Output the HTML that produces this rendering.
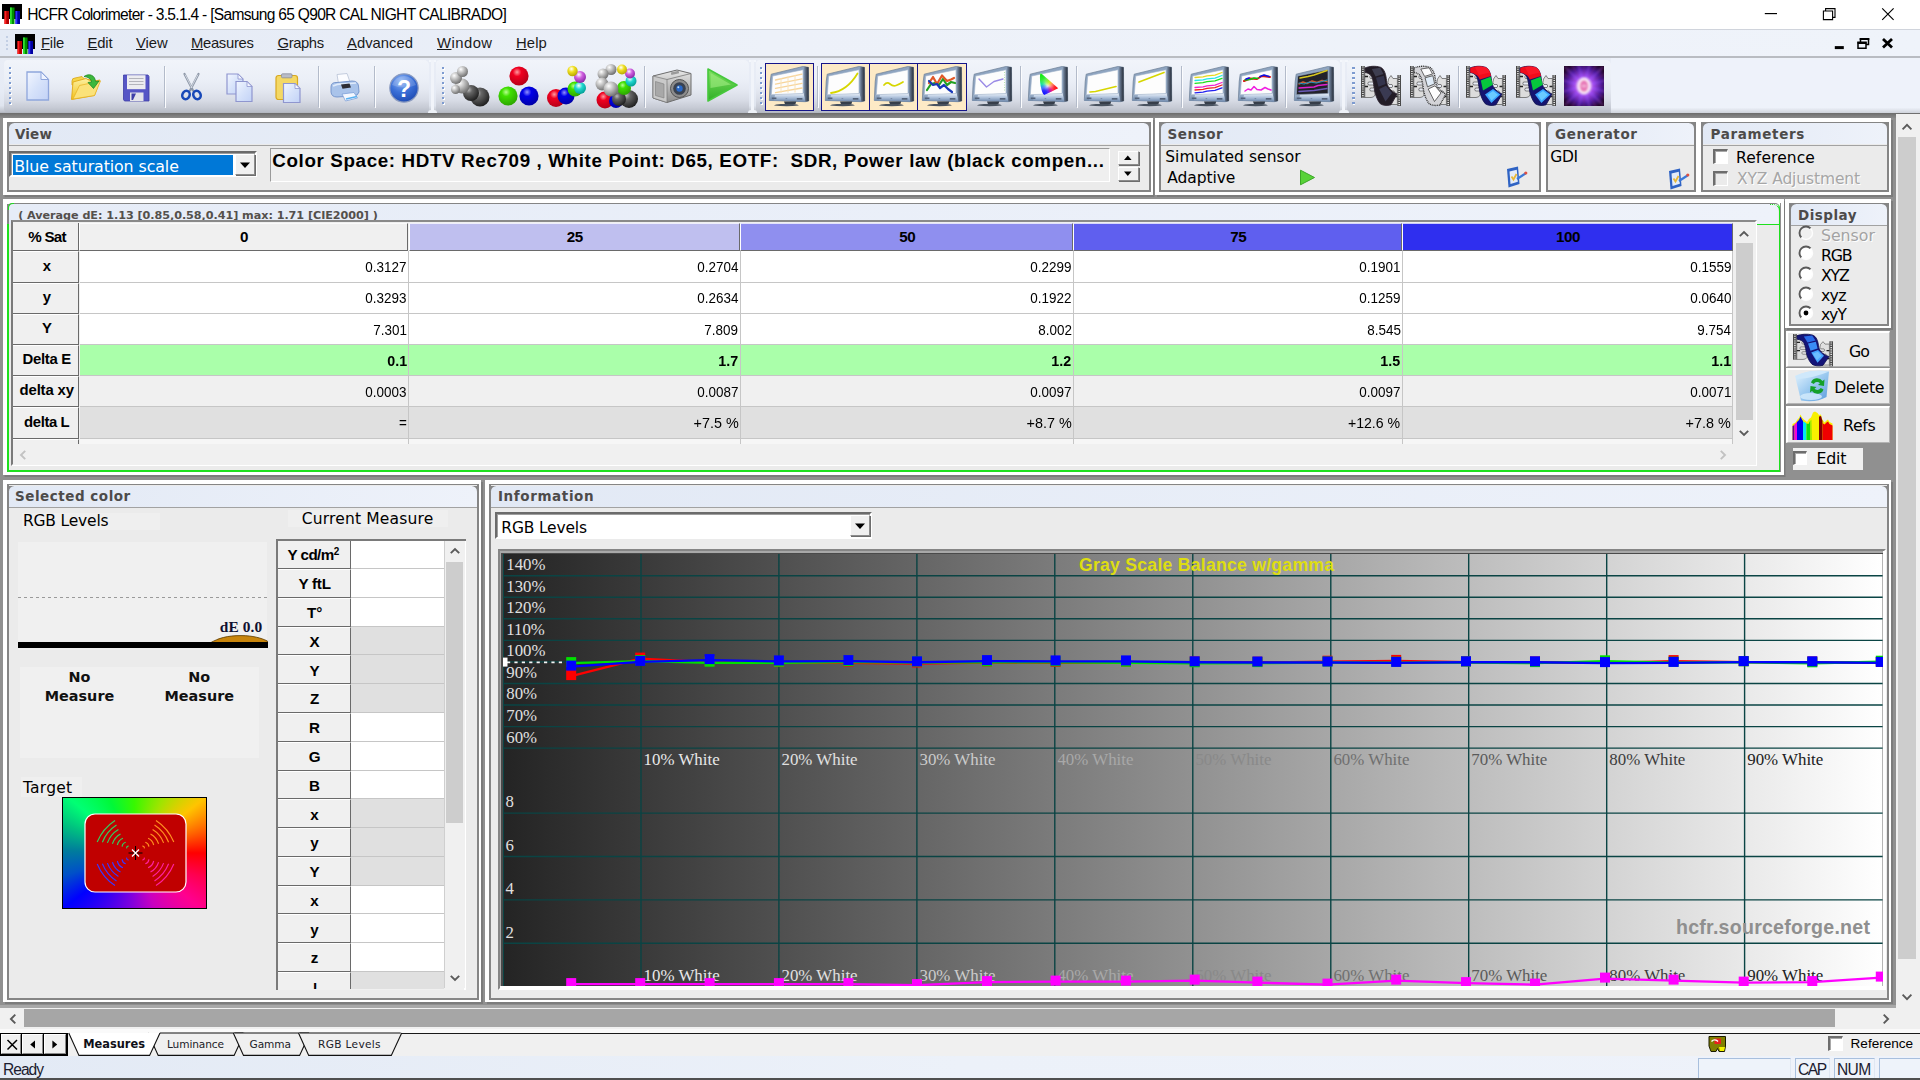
<!DOCTYPE html><html><head><meta charset="utf-8"><title>HCFR Colorimeter</title><style>
*{box-sizing:border-box;margin:0;padding:0}
html,body{width:1920px;height:1080px;overflow:hidden;background:#909090}
body{position:relative;font-family:"Liberation Sans",sans-serif;color:#000}
div{position:absolute}
svg{position:absolute;overflow:visible}
.t{white-space:nowrap;line-height:1}
.dj{font-family:"DejaVu Sans","Liberation Sans",sans-serif}
.djb{font-family:"DejaVu Sans","Liberation Sans",sans-serif;font-weight:bold}
.ser{font-family:"Liberation Serif",serif}
.hdr{background:linear-gradient(90deg,#e3eaf5,#eef2fa);border-bottom:1px solid #9c9c9c}
.pan{background:#ebebeb;border:2px solid #858585;border-top-width:2px}
.u{text-decoration:underline}
</style></head><body>
<!-- chrome -->
<div style="left:0px;top:0px;width:1920px;height:30px;background:#fff"></div>
<svg style="left:2px;top:4px" width="20" height="20" viewBox="0 0 20 20"><rect x="0" y="0" width="20" height="15" fill="#000"/><rect x="2.5" y="7" width="4.5" height="13" fill="#b00000"/><rect x="2.5" y="7" width="1.8" height="13" fill="#ff2020"/><rect x="8" y="3.5" width="4.5" height="16.5" fill="#009000"/><rect x="8" y="3.5" width="1.8" height="16.5" fill="#30e030"/><rect x="13.5" y="7" width="4.5" height="13" fill="#0000a0"/><rect x="13.5" y="7" width="1.8" height="13" fill="#3030ff"/></svg>
<div class="t" style="left:27.30px;top:6.80px;font-family:'Liberation Sans',sans-serif;font-size:15.6px;color:#000;letter-spacing:-0.716px;">HCFR Colorimeter - 3.5.1.4 - [Samsung 65 Q90R CAL NIGHT CALIBRADO]</div>
<svg style="left:1750px;top:0" width="170" height="30" viewBox="0 0 170 30"><path d="M14.8 13.6h12.2" stroke="#000" stroke-width="1.15" fill="none"/><path d="M73.4 11h9.2v8.6h-9.2z M75.6 11v-2.4h9.4v8.8h-2.4" stroke="#000" stroke-width="1.1" fill="none"/><path d="M132.2 8.4l11.4 11.4M143.6 8.4l-11.4 11.4" stroke="#000" stroke-width="1.15" fill="none"/></svg>
<div style="left:0px;top:29px;width:1920px;height:29px;background:linear-gradient(90deg,#e4eaf5 0%,#edf1f9 40%,#eff3fa 100%);border-top:1px solid #d0d4dc"></div>
<div style="left:0px;top:56.2px;width:1920px;height:1.4px;background:#b9bcc2"></div>
<div style="left:6px;top:36px;width:2px;height:2px;background:#c3cfe4"></div>
<div style="left:6px;top:40px;width:2px;height:2px;background:#c3cfe4"></div>
<div style="left:6px;top:44px;width:2px;height:2px;background:#c3cfe4"></div>
<div style="left:6px;top:48px;width:2px;height:2px;background:#c3cfe4"></div>
<svg style="left:15px;top:34px" width="20" height="20" viewBox="0 0 20 20"><rect x="0" y="0" width="20" height="15" fill="#000"/><rect x="2.5" y="7" width="4.5" height="13" fill="#b00000"/><rect x="2.5" y="7" width="1.8" height="13" fill="#ff2020"/><rect x="8" y="3.5" width="4.5" height="16.5" fill="#009000"/><rect x="8" y="3.5" width="1.8" height="16.5" fill="#30e030"/><rect x="13.5" y="7" width="4.5" height="13" fill="#0000a0"/><rect x="13.5" y="7" width="1.8" height="13" fill="#3030ff"/></svg>
<div class="t" style="left:41.00px;top:36.30px;font-family:'Liberation Sans',sans-serif;font-size:14.8px;color:#1a1a1a;letter-spacing:-0.212px;"><span class="u">F</span>ile</div>
<div class="t" style="left:87.50px;top:36.30px;font-family:'Liberation Sans',sans-serif;font-size:14.8px;color:#1a1a1a;letter-spacing:-0.126px;"><span class="u">E</span>dit</div>
<div class="t" style="left:136.00px;top:36.30px;font-family:'Liberation Sans',sans-serif;font-size:14.8px;color:#1a1a1a;letter-spacing:-0.078px;"><span class="u">V</span>iew</div>
<div class="t" style="left:191.00px;top:36.30px;font-family:'Liberation Sans',sans-serif;font-size:14.8px;color:#1a1a1a;letter-spacing:-0.310px;"><span class="u">M</span>easures</div>
<div class="t" style="left:277.50px;top:36.30px;font-family:'Liberation Sans',sans-serif;font-size:14.8px;color:#1a1a1a;letter-spacing:-0.389px;"><span class="u">G</span>raphs</div>
<div class="t" style="left:347.00px;top:36.30px;font-family:'Liberation Sans',sans-serif;font-size:14.8px;color:#1a1a1a;letter-spacing:0.021px;"><span class="u">A</span>dvanced</div>
<div class="t" style="left:437.00px;top:36.30px;font-family:'Liberation Sans',sans-serif;font-size:14.8px;color:#1a1a1a;letter-spacing:0.477px;"><span class="u">W</span>indow</div>
<div class="t" style="left:516.00px;top:36.30px;font-family:'Liberation Sans',sans-serif;font-size:14.8px;color:#1a1a1a;letter-spacing:0.140px;"><span class="u">H</span>elp</div>
<svg style="left:1825px;top:30px" width="80" height="28" viewBox="0 0 80 28"><path d="M9.8 17.6h9" stroke="#000" stroke-width="3" fill="none"/><path d="M33 13.2h8v5h-8z M35.5 12.5v-3.4h8v5.4h-2" stroke="#000" stroke-width="1.5" fill="none"/><path d="M32.2 12.6h9.6M34.7 8.9h9.6" stroke="#000" stroke-width="2"/><path d="M58 9l9 8.4M67 9l-9 8.4" stroke="#000" stroke-width="2.8" fill="none"/></svg>
<!-- toolbar -->
<svg width="0" height="0" style="left:0;top:0"><defs><linearGradient id="bz" x1="0" y1="0" x2="0" y2="1"><stop offset="0" stop-color="#c9d6e8"/><stop offset="0.7" stop-color="#a9bcd6"/><stop offset="1" stop-color="#6f86a8"/></linearGradient><linearGradient id="bzl" x1="0" y1="0" x2="0" y2="1"><stop offset="0" stop-color="#eef3fa"/><stop offset="0.45" stop-color="#b4c6de"/><stop offset="1" stop-color="#6c86aa"/></linearGradient><linearGradient id="sd" x1="0" y1="0" x2="1" y2="0"><stop offset="0" stop-color="#8fa4bc"/><stop offset="0.45" stop-color="#56647a"/><stop offset="1" stop-color="#262c36"/></linearGradient><linearGradient id="doc" x1="0" y1="0" x2="1" y2="1"><stop offset="0" stop-color="#f2f6ff"/><stop offset="0.5" stop-color="#d6e2fa"/><stop offset="1" stop-color="#c2d2f6"/></linearGradient><linearGradient id="fold" x1="0" y1="0" x2="0" y2="1"><stop offset="0" stop-color="#fdf0a0"/><stop offset="1" stop-color="#f2c21c"/></linearGradient><radialGradient id="bg1" cx="0.35" cy="0.3" r="0.75"><stop offset="0" stop-color="#fff"/><stop offset="0.25" stop-color="#d8d8d8"/><stop offset="1" stop-color="#6a6a6a"/></radialGradient><radialGradient id="bg2" cx="0.35" cy="0.3" r="0.75"><stop offset="0" stop-color="#bbb"/><stop offset="0.3" stop-color="#666"/><stop offset="1" stop-color="#1c1c1c"/></radialGradient><radialGradient id="br" cx="0.4" cy="0.3" r="0.75"><stop offset="0" stop-color="#ff9aa0"/><stop offset="0.3" stop-color="#f00020"/><stop offset="1" stop-color="#b00018"/></radialGradient><radialGradient id="bgn" cx="0.4" cy="0.3" r="0.75"><stop offset="0" stop-color="#b8ff90"/><stop offset="0.3" stop-color="#40e000"/><stop offset="1" stop-color="#2aa000"/></radialGradient><radialGradient id="bb" cx="0.4" cy="0.3" r="0.75"><stop offset="0" stop-color="#9090ff"/><stop offset="0.3" stop-color="#0000e8"/><stop offset="1" stop-color="#0000a0"/></radialGradient><radialGradient id="by" cx="0.4" cy="0.3" r="0.75"><stop offset="0" stop-color="#fff"/><stop offset="0.4" stop-color="#f0e020"/><stop offset="1" stop-color="#b0a000"/></radialGradient><radialGradient id="bm" cx="0.4" cy="0.3" r="0.75"><stop offset="0" stop-color="#fff"/><stop offset="0.4" stop-color="#d060e0"/><stop offset="1" stop-color="#8020a0"/></radialGradient><radialGradient id="bc" cx="0.4" cy="0.3" r="0.75"><stop offset="0" stop-color="#fff"/><stop offset="0.4" stop-color="#20d8d0"/><stop offset="1" stop-color="#009890"/></radialGradient><radialGradient id="hq" cx="0.4" cy="0.25" r="0.8"><stop offset="0" stop-color="#8db4f4"/><stop offset="0.5" stop-color="#3b70d8"/><stop offset="1" stop-color="#1c48b0"/></radialGradient><radialGradient id="pu" cx="0.5" cy="0.5" r="0.62"><stop offset="0" stop-color="#fff"/><stop offset="0.2" stop-color="#e8a8f8"/><stop offset="0.4" stop-color="#9448ee"/><stop offset="0.7" stop-color="#48189a"/><stop offset="1" stop-color="#200624"/></radialGradient><linearGradient id="grn" x1="0" y1="0" x2="0" y2="1"><stop offset="0" stop-color="#7fe060"/><stop offset="1" stop-color="#2fb028"/></linearGradient><linearGradient id="cam" x1="0" y1="0" x2="0" y2="1"><stop offset="0" stop-color="#e8e8e8"/><stop offset="1" stop-color="#8e8e8e"/></linearGradient></defs></svg>
<div style="left:0px;top:58px;width:1920px;height:56px;background:linear-gradient(180deg,#e9edf6 0%,#e6ebf5 60%,#dfe4ee 85%,#bfc3cc 96%,#9fa3ab 100%)"></div>
<div style="left:1611px;top:58px;width:309px;height:55px;background:linear-gradient(180deg,#eef2fa 0%,#eef2fa 90%,#cfd3db 100%)"></div>
<div style="left:0px;top:113px;width:1920px;height:5px;background:linear-gradient(180deg,#6c6c6c,#828282 70%,#8a8a8a)"></div>
<div style="left:4px;top:60px;width:424.5px;height:52px;background:linear-gradient(180deg,#f1f4fa 0%,#ebeff7 38%,#e4e8f1 58%,#d7dbe5 78%,#c6cad4 92%,#b8bdc7 100%);border-radius:4px 5px 3px 3px"></div>
<div style="left:436px;top:60px;width:312.5px;height:52px;background:linear-gradient(180deg,#f1f4fa 0%,#ebeff7 38%,#e4e8f1 58%,#d7dbe5 78%,#c6cad4 92%,#b8bdc7 100%);border-radius:4px 5px 3px 3px"></div>
<div style="left:756px;top:60px;width:584px;height:52px;background:linear-gradient(180deg,#f1f4fa 0%,#ebeff7 38%,#e4e8f1 58%,#d7dbe5 78%,#c6cad4 92%,#b8bdc7 100%);border-radius:4px 5px 3px 3px"></div>
<div style="left:1347px;top:60px;width:263.5px;height:52px;background:linear-gradient(180deg,#f1f4fa 0%,#ebeff7 38%,#e4e8f1 58%,#d7dbe5 78%,#c6cad4 92%,#b8bdc7 100%);border-radius:4px 5px 3px 3px"></div>
<div style="left:428.5px;top:60px;width:7.5px;height:2px;background:#f4f7fc"></div>
<div style="left:430.8px;top:60px;width:2.9px;height:52px;background:#f1f4fa"></div>
<div style="left:427.5px;top:110px;width:9.5px;height:2.5px;background:#eef2f8;border-radius:3px 3px 0 0"></div>
<div style="left:748.5px;top:60px;width:7.5px;height:2px;background:#f4f7fc"></div>
<div style="left:750.8px;top:60px;width:2.9px;height:52px;background:#f1f4fa"></div>
<div style="left:747.5px;top:110px;width:9.5px;height:2.5px;background:#eef2f8;border-radius:3px 3px 0 0"></div>
<div style="left:1340px;top:60px;width:7.5px;height:2px;background:#f4f7fc"></div>
<div style="left:1342.3px;top:60px;width:2.9px;height:52px;background:#f1f4fa"></div>
<div style="left:1339px;top:110px;width:9.5px;height:2.5px;background:#eef2f8;border-radius:3px 3px 0 0"></div>
<div style="left:10px;top:68px;width:2px;height:2px;background:#fff"></div><div style="left:9px;top:67px;width:2.2px;height:2.2px;background:#7d9bd0"></div><div style="left:10px;top:73px;width:2px;height:2px;background:#fff"></div><div style="left:9px;top:72px;width:2.2px;height:2.2px;background:#7d9bd0"></div><div style="left:10px;top:78px;width:2px;height:2px;background:#fff"></div><div style="left:9px;top:77px;width:2.2px;height:2.2px;background:#7d9bd0"></div><div style="left:10px;top:83px;width:2px;height:2px;background:#fff"></div><div style="left:9px;top:82px;width:2.2px;height:2.2px;background:#7d9bd0"></div><div style="left:10px;top:88px;width:2px;height:2px;background:#fff"></div><div style="left:9px;top:87px;width:2.2px;height:2.2px;background:#7d9bd0"></div><div style="left:10px;top:93px;width:2px;height:2px;background:#fff"></div><div style="left:9px;top:92px;width:2.2px;height:2.2px;background:#7d9bd0"></div><div style="left:10px;top:98px;width:2px;height:2px;background:#fff"></div><div style="left:9px;top:97px;width:2.2px;height:2.2px;background:#7d9bd0"></div><div style="left:10px;top:103px;width:2px;height:2px;background:#fff"></div><div style="left:9px;top:102px;width:2.2px;height:2.2px;background:#7d9bd0"></div>
<div style="left:442.7px;top:68px;width:2.0px;height:2px;background:#fff"></div><div style="left:441.7px;top:67px;width:2.2px;height:2.2px;background:#7d9bd0"></div><div style="left:442.7px;top:73px;width:2.0px;height:2px;background:#fff"></div><div style="left:441.7px;top:72px;width:2.2px;height:2.2px;background:#7d9bd0"></div><div style="left:442.7px;top:78px;width:2.0px;height:2px;background:#fff"></div><div style="left:441.7px;top:77px;width:2.2px;height:2.2px;background:#7d9bd0"></div><div style="left:442.7px;top:83px;width:2.0px;height:2px;background:#fff"></div><div style="left:441.7px;top:82px;width:2.2px;height:2.2px;background:#7d9bd0"></div><div style="left:442.7px;top:88px;width:2.0px;height:2px;background:#fff"></div><div style="left:441.7px;top:87px;width:2.2px;height:2.2px;background:#7d9bd0"></div><div style="left:442.7px;top:93px;width:2.0px;height:2px;background:#fff"></div><div style="left:441.7px;top:92px;width:2.2px;height:2.2px;background:#7d9bd0"></div><div style="left:442.7px;top:98px;width:2.0px;height:2px;background:#fff"></div><div style="left:441.7px;top:97px;width:2.2px;height:2.2px;background:#7d9bd0"></div><div style="left:442.7px;top:103px;width:2.0px;height:2px;background:#fff"></div><div style="left:441.7px;top:102px;width:2.2px;height:2.2px;background:#7d9bd0"></div>
<div style="left:761px;top:68px;width:2px;height:2px;background:#fff"></div><div style="left:760px;top:67px;width:2.2px;height:2.2px;background:#7d9bd0"></div><div style="left:761px;top:73px;width:2px;height:2px;background:#fff"></div><div style="left:760px;top:72px;width:2.2px;height:2.2px;background:#7d9bd0"></div><div style="left:761px;top:78px;width:2px;height:2px;background:#fff"></div><div style="left:760px;top:77px;width:2.2px;height:2.2px;background:#7d9bd0"></div><div style="left:761px;top:83px;width:2px;height:2px;background:#fff"></div><div style="left:760px;top:82px;width:2.2px;height:2.2px;background:#7d9bd0"></div><div style="left:761px;top:88px;width:2px;height:2px;background:#fff"></div><div style="left:760px;top:87px;width:2.2px;height:2.2px;background:#7d9bd0"></div><div style="left:761px;top:93px;width:2px;height:2px;background:#fff"></div><div style="left:760px;top:92px;width:2.2px;height:2.2px;background:#7d9bd0"></div><div style="left:761px;top:98px;width:2px;height:2px;background:#fff"></div><div style="left:760px;top:97px;width:2.2px;height:2.2px;background:#7d9bd0"></div><div style="left:761px;top:103px;width:2px;height:2px;background:#fff"></div><div style="left:760px;top:102px;width:2.2px;height:2.2px;background:#7d9bd0"></div>
<div style="left:1353.4px;top:68px;width:2.0px;height:2px;background:#fff"></div><div style="left:1352.4px;top:67px;width:2.2px;height:2.2px;background:#7d9bd0"></div><div style="left:1353.4px;top:73px;width:2.0px;height:2px;background:#fff"></div><div style="left:1352.4px;top:72px;width:2.2px;height:2.2px;background:#7d9bd0"></div><div style="left:1353.4px;top:78px;width:2.0px;height:2px;background:#fff"></div><div style="left:1352.4px;top:77px;width:2.2px;height:2.2px;background:#7d9bd0"></div><div style="left:1353.4px;top:83px;width:2.0px;height:2px;background:#fff"></div><div style="left:1352.4px;top:82px;width:2.2px;height:2.2px;background:#7d9bd0"></div><div style="left:1353.4px;top:88px;width:2.0px;height:2px;background:#fff"></div><div style="left:1352.4px;top:87px;width:2.2px;height:2.2px;background:#7d9bd0"></div><div style="left:1353.4px;top:93px;width:2.0px;height:2px;background:#fff"></div><div style="left:1352.4px;top:92px;width:2.2px;height:2.2px;background:#7d9bd0"></div><div style="left:1353.4px;top:98px;width:2.0px;height:2px;background:#fff"></div><div style="left:1352.4px;top:97px;width:2.2px;height:2.2px;background:#7d9bd0"></div><div style="left:1353.4px;top:103px;width:2.0px;height:2px;background:#fff"></div><div style="left:1352.4px;top:102px;width:2.2px;height:2.2px;background:#7d9bd0"></div>
<div style="left:164px;top:66px;width:1px;height:41px;background:#b3bbca"></div><div style="left:165px;top:67px;width:1px;height:41px;background:#fbfcfe"></div>
<div style="left:318px;top:66px;width:1px;height:41px;background:#b3bbca"></div><div style="left:319px;top:67px;width:1px;height:41px;background:#fbfcfe"></div>
<div style="left:374.3px;top:66px;width:1.0px;height:41px;background:#b3bbca"></div><div style="left:375.3px;top:67px;width:1.0px;height:41px;background:#fbfcfe"></div>
<div style="left:644px;top:66px;width:1px;height:41px;background:#b3bbca"></div><div style="left:645px;top:67px;width:1px;height:41px;background:#fbfcfe"></div>
<div style="left:817px;top:66px;width:1px;height:41px;background:#b3bbca"></div><div style="left:818px;top:67px;width:1px;height:41px;background:#fbfcfe"></div>
<div style="left:1019.7px;top:66px;width:1.0px;height:41px;background:#b3bbca"></div><div style="left:1020.7px;top:67px;width:1.0px;height:41px;background:#fbfcfe"></div>
<div style="left:1075.5px;top:66px;width:1.0px;height:41px;background:#b3bbca"></div><div style="left:1076.5px;top:67px;width:1.0px;height:41px;background:#fbfcfe"></div>
<div style="left:1181px;top:66px;width:1px;height:41px;background:#b3bbca"></div><div style="left:1182px;top:67px;width:1px;height:41px;background:#fbfcfe"></div>
<div style="left:1285.4px;top:66px;width:1.0px;height:41px;background:#b3bbca"></div><div style="left:1286.4px;top:67px;width:1.0px;height:41px;background:#fbfcfe"></div>
<div style="left:1458px;top:66px;width:1px;height:41px;background:#b3bbca"></div><div style="left:1459px;top:67px;width:1px;height:41px;background:#fbfcfe"></div>
<svg style="left:26px;top:71px" width="24" height="30" viewBox="0 0 24 30"><path d="M1 1H15L22.5 8.5V29H1Z" fill="url(#doc)" stroke="#8fa6dc" stroke-width="1.3"/><path d="M15 1V8.5H22.5Z" fill="#eef3ff" stroke="#8fa6dc" stroke-width="1"/></svg>
<svg style="left:70px;top:73px" width="32" height="29" viewBox="0 0 32 29"><path d="M2 8Q2 5 5 5L12 3.5L15 6.5H24V12H2Z" fill="#f5d548" stroke="#d9a514" stroke-width=".8"/><path d="M1.5 26.5L3 9L16 5.5Q19 8 24 8L30 7L24.5 22.5Z" fill="url(#fold)" stroke="#e0a816" stroke-width=".9"/><path d="M3 26L9.5 12.5L30.5 8L24.5 22.5Z" fill="#fbe27a" stroke="#e6b020" stroke-width=".7"/><path d="M14 3.5C19 0 25 2 25.5 8.5L29 8L23.5 15.5L18 9.5L21.5 9C21 5.5 18 4 14 3.5Z" fill="#3cb83c" stroke="#1f8a24" stroke-width=".8"/></svg>
<svg style="left:122px;top:73.5px" width="28" height="28" viewBox="0 0 28 28"><path d="M1.5 1H26L27 2.5V27H2.5L1.5 25.5Z" fill="#5656c6" stroke="#3c3ca4" stroke-width=".8"/><rect x="5" y="1.2" width="18.5" height="14" fill="#ececf0"/><path d="M7 4.5H21.5M7 7.5H21.5M7 10.5H21.5" stroke="#b4b4bc" stroke-width="1"/><rect x="8" y="18.5" width="13.5" height="8.5" fill="#e4e4ea"/><path d="M9.5 19.5H14L11 26H9.5Z" fill="#4040a8"/></svg>
<svg style="left:180px;top:73px" width="23" height="28" viewBox="0 0 23 28"><path d="M4.5 1L13 17.5M18.5 1L10 17.5" stroke="#8c96a6" stroke-width="2.2" stroke-linecap="round"/><path d="M5 1.5L12 15M18 1.5L11 15" stroke="#dfe5ee" stroke-width=".8"/><ellipse cx="6" cy="22" rx="3.6" ry="4.3" fill="none" stroke="#1848b8" stroke-width="2.6" transform="rotate(25 6 22)"/><ellipse cx="17" cy="22" rx="3.6" ry="4.3" fill="none" stroke="#1848b8" stroke-width="2.6" transform="rotate(-25 17 22)"/></svg>
<svg style="left:225.5px;top:72.5px" width="28" height="30" viewBox="0 0 28 30"><path d="M1 1H12L17 6V21H1Z" fill="url(#doc)" stroke="#8f96cf" stroke-width="1.2"/><path d="M12 1V6H17Z" fill="#f2f5ff" stroke="#8f96cf" stroke-width=".8"/><path d="M10 8.5H21L26 13.5V28.5H10Z" fill="url(#doc)" stroke="#8f96cf" stroke-width="1.2"/><path d="M21 8.5V13.5H26Z" fill="#f2f5ff" stroke="#8f96cf" stroke-width=".8"/></svg>
<svg style="left:274.5px;top:72.5px" width="27" height="31" viewBox="0 0 27 31"><rect x="1" y="2.5" width="21.5" height="24" rx="2.5" fill="#f4d864" stroke="#d8a820" stroke-width="1.2"/><rect x="6.5" y="0.8" width="10.5" height="4" rx="1" fill="#b8bcc8" stroke="#8a8e9c" stroke-width=".8"/><path d="M8.5 10.5H20.0L25.0 15.5V29.5H8.5Z" fill="url(#doc)" stroke="#8f96cf" stroke-width="1.2"/><path d="M20.0 10.5V15.5H25.0Z" fill="#f2f5ff" stroke="#8f96cf" stroke-width=".8"/></svg>
<svg style="left:330px;top:73px" width="30" height="29" viewBox="0 0 30 29"><path d="M7 1.5L17 0.5L20 9L8.5 10.5Z" fill="#fbfcff" stroke="#b8c2d6" stroke-width=".8"/><path d="M1 14Q1 9 7 9.5L22 8Q28 8 28.5 13L29 19Q28 23 23 23L7 24Q1.5 24 1 19Z" fill="#a9c3ea" stroke="#6f90c8" stroke-width=".9"/><path d="M3 13Q8 10.5 14 11L26 10" stroke="#dfeafa" stroke-width="1.6" fill="none"/><path d="M11 11.5L19.5 10.5L21 14.5L12.5 15.8Z" fill="#2c2c34"/><path d="M12 21L24 19.5L27.5 25L15.5 28Z" fill="#f4f8ff" stroke="#7ea0d8" stroke-width=".8"/><path d="M16 26L27 23.5" stroke="#58b0f0" stroke-width="1.6"/></svg>
<svg style="left:388.5px;top:73px" width="30" height="30" viewBox="0 0 30 30"><circle cx="15" cy="15" r="14.2" fill="url(#hq)" stroke="#8c9cc0" stroke-width="1.2"/><path d="M3 12A12.5 12.5 0 0 1 27 12Q15 17 3 12Z" fill="#fff" opacity=".18"/><text x="15" y="23.5" text-anchor="middle" font-family="Liberation Sans,sans-serif" font-weight="bold" font-size="23" fill="#fff">?</text></svg>
<svg style="left:449px;top:65px" width="43" height="43" viewBox="0 0 43 43"><circle cx="31" cy="32" r="9.5" fill="url(#bg2)"/><circle cx="22" cy="28" r="8" fill="url(#bg2)"/><circle cx="13" cy="21" r="7.5" fill="url(#bg1)"/><circle cx="7" cy="13" r="6" fill="url(#bg1)"/><circle cx="13.5" cy="6.5" r="5.5" fill="url(#bg1)"/><circle cx="6.5" cy="24.5" r="4.5" fill="url(#bg1)"/></svg>
<svg style="left:497px;top:65px" width="43" height="43" viewBox="0 0 43 43"><circle cx="22" cy="11" r="9.6" fill="url(#br)"/><circle cx="11" cy="31" r="9.6" fill="url(#bgn)"/><circle cx="32" cy="31" r="9.6" fill="url(#bb)"/></svg>
<svg style="left:546px;top:65px" width="43" height="43" viewBox="0 0 43 43"><circle cx="10" cy="33" r="9" fill="url(#br)"/><circle cx="20" cy="31" r="8.5" fill="url(#bb)"/><circle cx="29" cy="24" r="7.5" fill="url(#bgn)"/><circle cx="34" cy="23" r="6" fill="url(#bc)"/><circle cx="34" cy="12" r="6" fill="url(#bm)"/><circle cx="26.5" cy="6" r="5.2" fill="url(#by)"/></svg>
<svg style="left:595px;top:65px" width="43" height="43" viewBox="0 0 43 43"><circle cx="10" cy="35" r="8.5" fill="url(#br)"/><circle cx="21" cy="36" r="7" fill="url(#bb)"/><circle cx="34" cy="34" r="9" fill="url(#bg2)"/><circle cx="24" cy="34" r="7" fill="url(#bg2)"/><circle cx="29" cy="23" r="7" fill="url(#bgn)"/><circle cx="36" cy="16" r="5.5" fill="url(#bc)"/><circle cx="35" cy="8.5" r="5" fill="url(#bm)"/><circle cx="27" cy="4.5" r="5" fill="url(#by)"/><circle cx="16" cy="4.5" r="5.5" fill="url(#bg1)"/><circle cx="8" cy="9" r="5.5" fill="url(#bg1)"/><circle cx="7" cy="19" r="6.5" fill="url(#bg1)"/><circle cx="16" cy="24" r="7.5" fill="url(#bg1)"/></svg>
<svg style="left:651px;top:67px" width="43" height="37" viewBox="0 0 43 37"><path d="M2 9L26 3L40 6.5V28L16 35.5L2 31Z" fill="url(#cam)" stroke="#6c6c6c" stroke-width="1"/><path d="M2 9L16 12.5V35.5L2 31Z" fill="#c9c9c9" stroke="#777" stroke-width=".7"/><path d="M16 12.5L40 6.5" stroke="#777" stroke-width=".8"/><path d="M4.5 14.5L13 17V31L4.5 28.5Z" fill="#a8a8a8" stroke="#808080" stroke-width=".6"/><circle cx="28.5" cy="21.5" r="9" fill="#8c8c8c" stroke="#555" stroke-width="1"/><circle cx="28.5" cy="21.5" r="6.3" fill="#3a4250"/><circle cx="28.5" cy="21.5" r="3.2" fill="#2868c8"/><circle cx="27.3" cy="20.3" r="1" fill="#bfe0ff"/><rect x="20" y="4.6" width="8" height="2.6" fill="#9a9a9a" transform="rotate(-13 24 6)"/></svg>
<svg style="left:706px;top:67px" width="33" height="36" viewBox="0 0 33 36"><path d="M2 2L31 18L2 34Z" fill="url(#grn)" stroke="#46c83c" stroke-width="1.6" stroke-linejoin="round"/><path d="M4.5 6L25 17.5L4.5 21Z" fill="#a8f088" opacity=".55"/></svg>
<div style="left:765px;top:62.6px;width:48.6px;height:48.7px;background:#fdeac6;border:1.3px solid #15158a"></div>
<div style="left:821px;top:62.6px;width:48.5px;height:48.7px;background:#fdeac6;border:1.3px solid #15158a"></div>
<div style="left:868.5px;top:62.6px;width:49.7px;height:48.7px;background:#fdeac6;border:1.3px solid #15158a"></div>
<div style="left:917.2px;top:62.6px;width:49.8px;height:48.7px;background:#fdeac6;border:1.3px solid #15158a"></div>
<svg style="left:769px;top:66.2px" width="40" height="41" viewBox="0 0 40 41"><path d="M2.2 8.2L33.8 0.5L39.5 1.3L39.7 35L36.2 35.7L0.3 34.4L1.2 15.6Z" fill="#8ea4c0" stroke="#6a7c94" stroke-width=".7"/><path d="M34.4 0.6L39.5 1.3L39.7 35L36.2 35.7L34.8 28Z" fill="url(#sd)"/><path d="M2 28.6L34.6 27.3L36.2 35.7L0.3 34.4Z" fill="url(#bzl)"/><path d="M0.3 34.4L2 28.6L6 28.5L5 34.6Z" fill="#7088a8" opacity=".6"/><path d="M3.7 10L34 3.7L34 27.5L2.3 28.7Z" fill="#fdfdfd" stroke="#9fb2ca" stroke-width=".6"/><rect x="2.8" y="31.5" width="4.6" height="1.6" fill="#55637a"/><rect x="27.8" y="32" width="5.6" height="1.7" fill="#55637a"/><rect x="16.6" y="32" width="1.6" height="1.1" fill="#7b8ca8"/><path d="M15 35.6H27.2L26.4 38.2H16Z" fill="#363e4a"/><path d="M5 39.6Q6 37.9 12 37.9H24Q29 37.9 29.8 39.6Q18 41 5 39.6Z" fill="#48525f"/><path d="M6.5 14.0L33 8.2" stroke="#f6d49a" stroke-width="1.3" fill="none" stroke-linejoin="round" stroke-linecap="round"/><path d="M6.5 18.2L33 12.799999999999999" stroke="#f6d49a" stroke-width="1.3" fill="none" stroke-linejoin="round" stroke-linecap="round"/><path d="M6.5 22.4L33 17.4" stroke="#f6d49a" stroke-width="1.3" fill="none" stroke-linejoin="round" stroke-linecap="round"/><path d="M6.5 26.6L33 22.0" stroke="#f6d49a" stroke-width="1.3" fill="none" stroke-linejoin="round" stroke-linecap="round"/><path d="M12 12.5V26.5" stroke="#f9e2b8" stroke-width="1.0" fill="none" stroke-linejoin="round" stroke-linecap="round"/><path d="M19 10.9V26.3" stroke="#f9e2b8" stroke-width="1.0" fill="none" stroke-linejoin="round" stroke-linecap="round"/><path d="M26 9.3V26.1" stroke="#f9e2b8" stroke-width="1.0" fill="none" stroke-linejoin="round" stroke-linecap="round"/></svg>
<svg style="left:825px;top:66.2px" width="40" height="41" viewBox="0 0 40 41"><path d="M2.2 8.2L33.8 0.5L39.5 1.3L39.7 35L36.2 35.7L0.3 34.4L1.2 15.6Z" fill="#8ea4c0" stroke="#6a7c94" stroke-width=".7"/><path d="M34.4 0.6L39.5 1.3L39.7 35L36.2 35.7L34.8 28Z" fill="url(#sd)"/><path d="M2 28.6L34.6 27.3L36.2 35.7L0.3 34.4Z" fill="url(#bzl)"/><path d="M0.3 34.4L2 28.6L6 28.5L5 34.6Z" fill="#7088a8" opacity=".6"/><path d="M3.7 10L34 3.7L34 27.5L2.3 28.7Z" fill="#fdfdfd" stroke="#9fb2ca" stroke-width=".6"/><rect x="2.8" y="31.5" width="4.6" height="1.6" fill="#55637a"/><rect x="27.8" y="32" width="5.6" height="1.7" fill="#55637a"/><rect x="16.6" y="32" width="1.6" height="1.1" fill="#7b8ca8"/><path d="M15 35.6H27.2L26.4 38.2H16Z" fill="#363e4a"/><path d="M5 39.6Q6 37.9 12 37.9H24Q29 37.9 29.8 39.6Q18 41 5 39.6Z" fill="#48525f"/><path d="M6 27Q22 25 32.5 7.5" stroke="#d6d600" stroke-width="1.8" fill="none" stroke-linejoin="round" stroke-linecap="round"/></svg>
<svg style="left:873.5px;top:66.2px" width="40" height="41" viewBox="0 0 40 41"><path d="M2.2 8.2L33.8 0.5L39.5 1.3L39.7 35L36.2 35.7L0.3 34.4L1.2 15.6Z" fill="#8ea4c0" stroke="#6a7c94" stroke-width=".7"/><path d="M34.4 0.6L39.5 1.3L39.7 35L36.2 35.7L34.8 28Z" fill="url(#sd)"/><path d="M2 28.6L34.6 27.3L36.2 35.7L0.3 34.4Z" fill="url(#bzl)"/><path d="M0.3 34.4L2 28.6L6 28.5L5 34.6Z" fill="#7088a8" opacity=".6"/><path d="M3.7 10L34 3.7L34 27.5L2.3 28.7Z" fill="#fdfdfd" stroke="#9fb2ca" stroke-width=".6"/><rect x="2.8" y="31.5" width="4.6" height="1.6" fill="#55637a"/><rect x="27.8" y="32" width="5.6" height="1.7" fill="#55637a"/><rect x="16.6" y="32" width="1.6" height="1.1" fill="#7b8ca8"/><path d="M15 35.6H27.2L26.4 38.2H16Z" fill="#363e4a"/><path d="M5 39.6Q6 37.9 12 37.9H24Q29 37.9 29.8 39.6Q18 41 5 39.6Z" fill="#48525f"/><path d="M10 19Q13 15.5 16 18T22 19.5T29 16" stroke="#d6d600" stroke-width="1.7" fill="none" stroke-linejoin="round" stroke-linecap="round"/></svg>
<svg style="left:922px;top:66.2px" width="40" height="41" viewBox="0 0 40 41"><path d="M2.2 8.2L33.8 0.5L39.5 1.3L39.7 35L36.2 35.7L0.3 34.4L1.2 15.6Z" fill="#8ea4c0" stroke="#6a7c94" stroke-width=".7"/><path d="M34.4 0.6L39.5 1.3L39.7 35L36.2 35.7L34.8 28Z" fill="url(#sd)"/><path d="M2 28.6L34.6 27.3L36.2 35.7L0.3 34.4Z" fill="url(#bzl)"/><path d="M0.3 34.4L2 28.6L6 28.5L5 34.6Z" fill="#7088a8" opacity=".6"/><path d="M3.7 10L34 3.7L34 27.5L2.3 28.7Z" fill="#fdfdfd" stroke="#9fb2ca" stroke-width=".6"/><rect x="2.8" y="31.5" width="4.6" height="1.6" fill="#55637a"/><rect x="27.8" y="32" width="5.6" height="1.7" fill="#55637a"/><rect x="16.6" y="32" width="1.6" height="1.1" fill="#7b8ca8"/><path d="M15 35.6H27.2L26.4 38.2H16Z" fill="#363e4a"/><path d="M5 39.6Q6 37.9 12 37.9H24Q29 37.9 29.8 39.6Q18 41 5 39.6Z" fill="#48525f"/><path d="M5 24L9 18L13 17L17 19L21 13L25 19L29 16L33 17" stroke="#22a022" stroke-width="2.2" fill="none" stroke-linejoin="round" stroke-linecap="round"/><path d="M7 17L11 11L15 18L20 9.5L25 15L29 13.5L32 12" stroke="#e05828" stroke-width="2.2" fill="none" stroke-linejoin="round" stroke-linecap="round"/><path d="M7 15L11 19L15 18L18 22L22 19L26 23L30 26" stroke="#1838b8" stroke-width="2.2" fill="none" stroke-linejoin="round" stroke-linecap="round"/></svg>
<svg style="left:971.7px;top:66.2px" width="40" height="41" viewBox="0 0 40 41"><path d="M2.2 8.2L33.8 0.5L39.5 1.3L39.7 35L36.2 35.7L0.3 34.4L1.2 15.6Z" fill="#8ea4c0" stroke="#6a7c94" stroke-width=".7"/><path d="M34.4 0.6L39.5 1.3L39.7 35L36.2 35.7L34.8 28Z" fill="url(#sd)"/><path d="M2 28.6L34.6 27.3L36.2 35.7L0.3 34.4Z" fill="url(#bzl)"/><path d="M0.3 34.4L2 28.6L6 28.5L5 34.6Z" fill="#7088a8" opacity=".6"/><path d="M3.7 10L34 3.7L34 27.5L2.3 28.7Z" fill="#fdfdfd" stroke="#9fb2ca" stroke-width=".6"/><rect x="2.8" y="31.5" width="4.6" height="1.6" fill="#55637a"/><rect x="27.8" y="32" width="5.6" height="1.7" fill="#55637a"/><rect x="16.6" y="32" width="1.6" height="1.1" fill="#7b8ca8"/><path d="M15 35.6H27.2L26.4 38.2H16Z" fill="#363e4a"/><path d="M5 39.6Q6 37.9 12 37.9H24Q29 37.9 29.8 39.6Q18 41 5 39.6Z" fill="#48525f"/><path d="M7 13L14.5 21L22 15.5L31 13" stroke="#9a8ae6" stroke-width="1.4" fill="none" stroke-linejoin="round" stroke-linecap="round"/><path d="M32.5 6V25" stroke="#b8e0b0" stroke-width="1" stroke-dasharray="1 1.5"/></svg>
<svg style="left:1027.7px;top:66.2px" width="40" height="41" viewBox="0 0 40 41"><path d="M2.2 8.2L33.8 0.5L39.5 1.3L39.7 35L36.2 35.7L0.3 34.4L1.2 15.6Z" fill="#8ea4c0" stroke="#6a7c94" stroke-width=".7"/><path d="M34.4 0.6L39.5 1.3L39.7 35L36.2 35.7L34.8 28Z" fill="url(#sd)"/><path d="M2 28.6L34.6 27.3L36.2 35.7L0.3 34.4Z" fill="url(#bzl)"/><path d="M0.3 34.4L2 28.6L6 28.5L5 34.6Z" fill="#7088a8" opacity=".6"/><path d="M3.7 10L34 3.7L34 27.5L2.3 28.7Z" fill="#fdfdfd" stroke="#9fb2ca" stroke-width=".6"/><rect x="2.8" y="31.5" width="4.6" height="1.6" fill="#55637a"/><rect x="27.8" y="32" width="5.6" height="1.7" fill="#55637a"/><rect x="16.6" y="32" width="1.6" height="1.1" fill="#7b8ca8"/><path d="M15 35.6H27.2L26.4 38.2H16Z" fill="#363e4a"/><path d="M5 39.6Q6 37.9 12 37.9H24Q29 37.9 29.8 39.6Q18 41 5 39.6Z" fill="#48525f"/><defs><radialGradient id="cg1" gradientUnits="userSpaceOnUse" cx="13" cy="9" r="13"><stop offset="0" stop-color="#10e810"/><stop offset="0.35" stop-color="#10e810" stop-opacity=".85"/><stop offset="1" stop-color="#10e810" stop-opacity="0"/></radialGradient><radialGradient id="cg2" gradientUnits="userSpaceOnUse" cx="15.8" cy="27.5" r="9.5"><stop offset="0" stop-color="#1010ff"/><stop offset="0.35" stop-color="#1010ff" stop-opacity=".85"/><stop offset="1" stop-color="#1010ff" stop-opacity="0"/></radialGradient><radialGradient id="cg3" gradientUnits="userSpaceOnUse" cx="29.5" cy="22" r="10"><stop offset="0" stop-color="#ff0808"/><stop offset="0.35" stop-color="#ff0808" stop-opacity=".85"/><stop offset="1" stop-color="#ff0808" stop-opacity="0"/></radialGradient><radialGradient id="cg4" gradientUnits="userSpaceOnUse" cx="12.3" cy="19" r="6.5"><stop offset="0" stop-color="#10e0f0"/><stop offset="0.35" stop-color="#10e0f0" stop-opacity=".85"/><stop offset="1" stop-color="#10e0f0" stop-opacity="0"/></radialGradient><radialGradient id="cg5" gradientUnits="userSpaceOnUse" cx="22" cy="15" r="6"><stop offset="0" stop-color="#f0f020"/><stop offset="0.35" stop-color="#f0f020" stop-opacity=".85"/><stop offset="1" stop-color="#f0f020" stop-opacity="0"/></radialGradient><radialGradient id="cg6" gradientUnits="userSpaceOnUse" cx="22.5" cy="25.5" r="5.5"><stop offset="0" stop-color="#f020e0"/><stop offset="0.35" stop-color="#f020e0" stop-opacity=".85"/><stop offset="1" stop-color="#f020e0" stop-opacity="0"/></radialGradient></defs><path d="M12.2 7.6Q13.2 7 14.2 8.3L30.2 22.2L16.4 28.9Q14.8 28.6 13.6 24Q11.2 15 12.2 7.6Z" fill="#fff"/><path d="M12.2 7.6Q13.2 7 14.2 8.3L30.2 22.2L16.4 28.9Q14.8 28.6 13.6 24Q11.2 15 12.2 7.6Z" fill="url(#cg4)"/><path d="M12.2 7.6Q13.2 7 14.2 8.3L30.2 22.2L16.4 28.9Q14.8 28.6 13.6 24Q11.2 15 12.2 7.6Z" fill="url(#cg5)"/><path d="M12.2 7.6Q13.2 7 14.2 8.3L30.2 22.2L16.4 28.9Q14.8 28.6 13.6 24Q11.2 15 12.2 7.6Z" fill="url(#cg6)"/><path d="M12.2 7.6Q13.2 7 14.2 8.3L30.2 22.2L16.4 28.9Q14.8 28.6 13.6 24Q11.2 15 12.2 7.6Z" fill="url(#cg1)"/><path d="M12.2 7.6Q13.2 7 14.2 8.3L30.2 22.2L16.4 28.9Q14.8 28.6 13.6 24Q11.2 15 12.2 7.6Z" fill="url(#cg2)"/><path d="M12.2 7.6Q13.2 7 14.2 8.3L30.2 22.2L16.4 28.9Q14.8 28.6 13.6 24Q11.2 15 12.2 7.6Z" fill="url(#cg3)"/></svg>
<svg style="left:1083.5px;top:66.2px" width="40" height="41" viewBox="0 0 40 41"><path d="M2.2 8.2L33.8 0.5L39.5 1.3L39.7 35L36.2 35.7L0.3 34.4L1.2 15.6Z" fill="#8ea4c0" stroke="#6a7c94" stroke-width=".7"/><path d="M34.4 0.6L39.5 1.3L39.7 35L36.2 35.7L34.8 28Z" fill="url(#sd)"/><path d="M2 28.6L34.6 27.3L36.2 35.7L0.3 34.4Z" fill="url(#bzl)"/><path d="M0.3 34.4L2 28.6L6 28.5L5 34.6Z" fill="#7088a8" opacity=".6"/><path d="M3.7 10L34 3.7L34 27.5L2.3 28.7Z" fill="#fdfdfd" stroke="#9fb2ca" stroke-width=".6"/><rect x="2.8" y="31.5" width="4.6" height="1.6" fill="#55637a"/><rect x="27.8" y="32" width="5.6" height="1.7" fill="#55637a"/><rect x="16.6" y="32" width="1.6" height="1.1" fill="#7b8ca8"/><path d="M15 35.6H27.2L26.4 38.2H16Z" fill="#363e4a"/><path d="M5 39.6Q6 37.9 12 37.9H24Q29 37.9 29.8 39.6Q18 41 5 39.6Z" fill="#48525f"/><path d="M6 26L11.5 25.5L32 20.5" stroke="#d6d600" stroke-width="1.7" fill="none" stroke-linejoin="round" stroke-linecap="round"/></svg>
<svg style="left:1132px;top:66.2px" width="40" height="41" viewBox="0 0 40 41"><path d="M2.2 8.2L33.8 0.5L39.5 1.3L39.7 35L36.2 35.7L0.3 34.4L1.2 15.6Z" fill="#8ea4c0" stroke="#6a7c94" stroke-width=".7"/><path d="M34.4 0.6L39.5 1.3L39.7 35L36.2 35.7L34.8 28Z" fill="url(#sd)"/><path d="M2 28.6L34.6 27.3L36.2 35.7L0.3 34.4Z" fill="url(#bzl)"/><path d="M0.3 34.4L2 28.6L6 28.5L5 34.6Z" fill="#7088a8" opacity=".6"/><path d="M3.7 10L34 3.7L34 27.5L2.3 28.7Z" fill="#fdfdfd" stroke="#9fb2ca" stroke-width=".6"/><rect x="2.8" y="31.5" width="4.6" height="1.6" fill="#55637a"/><rect x="27.8" y="32" width="5.6" height="1.7" fill="#55637a"/><rect x="16.6" y="32" width="1.6" height="1.1" fill="#7b8ca8"/><path d="M15 35.6H27.2L26.4 38.2H16Z" fill="#363e4a"/><path d="M5 39.6Q6 37.9 12 37.9H24Q29 37.9 29.8 39.6Q18 41 5 39.6Z" fill="#48525f"/><path d="M7 16L32 6.5" stroke="#d6d600" stroke-width="1.7" fill="none" stroke-linejoin="round" stroke-linecap="round"/></svg>
<svg style="left:1188.9px;top:66.2px" width="40" height="41" viewBox="0 0 40 41"><path d="M2.2 8.2L33.8 0.5L39.5 1.3L39.7 35L36.2 35.7L0.3 34.4L1.2 15.6Z" fill="#8ea4c0" stroke="#6a7c94" stroke-width=".7"/><path d="M34.4 0.6L39.5 1.3L39.7 35L36.2 35.7L34.8 28Z" fill="url(#sd)"/><path d="M2 28.6L34.6 27.3L36.2 35.7L0.3 34.4Z" fill="url(#bzl)"/><path d="M0.3 34.4L2 28.6L6 28.5L5 34.6Z" fill="#7088a8" opacity=".6"/><path d="M3.7 10L34 3.7L34 27.5L2.3 28.7Z" fill="#fdfdfd" stroke="#9fb2ca" stroke-width=".6"/><rect x="2.8" y="31.5" width="4.6" height="1.6" fill="#55637a"/><rect x="27.8" y="32" width="5.6" height="1.7" fill="#55637a"/><rect x="16.6" y="32" width="1.6" height="1.1" fill="#7b8ca8"/><path d="M15 35.6H27.2L26.4 38.2H16Z" fill="#363e4a"/><path d="M5 39.6Q6 37.9 12 37.9H24Q29 37.9 29.8 39.6Q18 41 5 39.6Z" fill="#48525f"/><path d="M6 11.5L14 10.9L18 9.9L26 9.1L33 6.5" stroke="#e6d820" stroke-width="1.3" fill="none" stroke-linejoin="round" stroke-linecap="round"/><path d="M6 14.5L14 13.9L18 12.9L26 12.1L33 9.5" stroke="#20e8e8" stroke-width="1.3" fill="none" stroke-linejoin="round" stroke-linecap="round"/><path d="M6 17.3L14 16.7L18 15.700000000000001L26 14.9L33 12.3" stroke="#20e020" stroke-width="1.3" fill="none" stroke-linejoin="round" stroke-linecap="round"/><path d="M6 21.5L14 20.9L18 19.9L26 19.1L33 16.5" stroke="#f020d0" stroke-width="1.3" fill="none" stroke-linejoin="round" stroke-linecap="round"/><path d="M6 24L14 23.4L18 22.4L26 21.6L33 19" stroke="#f02020" stroke-width="1.3" fill="none" stroke-linejoin="round" stroke-linecap="round"/><path d="M6 26.8L14 26.2L18 25.2L26 24.400000000000002L33 21.8" stroke="#2020f0" stroke-width="1.3" fill="none" stroke-linejoin="round" stroke-linecap="round"/></svg>
<svg style="left:1237.5px;top:66.2px" width="40" height="41" viewBox="0 0 40 41"><path d="M2.2 8.2L33.8 0.5L39.5 1.3L39.7 35L36.2 35.7L0.3 34.4L1.2 15.6Z" fill="#8ea4c0" stroke="#6a7c94" stroke-width=".7"/><path d="M34.4 0.6L39.5 1.3L39.7 35L36.2 35.7L34.8 28Z" fill="url(#sd)"/><path d="M2 28.6L34.6 27.3L36.2 35.7L0.3 34.4Z" fill="url(#bzl)"/><path d="M0.3 34.4L2 28.6L6 28.5L5 34.6Z" fill="#7088a8" opacity=".6"/><path d="M3.7 10L34 3.7L34 27.5L2.3 28.7Z" fill="#fdfdfd" stroke="#9fb2ca" stroke-width=".6"/><rect x="2.8" y="31.5" width="4.6" height="1.6" fill="#55637a"/><rect x="27.8" y="32" width="5.6" height="1.7" fill="#55637a"/><rect x="16.6" y="32" width="1.6" height="1.1" fill="#7b8ca8"/><path d="M15 35.6H27.2L26.4 38.2H16Z" fill="#363e4a"/><path d="M5 39.6Q6 37.9 12 37.9H24Q29 37.9 29.8 39.6Q18 41 5 39.6Z" fill="#48525f"/><path d="M6 15L12 12.5L19 13L24 10L32 11" stroke="#e01010" stroke-width="2" fill="none" stroke-linejoin="round" stroke-linecap="round"/><path d="M7 14L12 13.5L16 12L20 12.5" stroke="#10c010" stroke-width="1.6" fill="none" stroke-linejoin="round" stroke-linecap="round"/><path d="M8 13L11 12M22 10.5L26 9L31 10.5" stroke="#1010e0" stroke-width="1.8" fill="none" stroke-linejoin="round" stroke-linecap="round"/><path d="M7 25L10 23L13 24L16 20.5L19 23.5L23 24L27 21.5L30 23L33 24" stroke="#f020e0" stroke-width="1.5" fill="none" stroke-linejoin="round" stroke-linecap="round"/></svg>
<svg style="left:1293.5px;top:66.2px" width="40" height="41" viewBox="0 0 40 41"><path d="M2.2 8.2L33.8 0.5L39.5 1.3L39.7 35L36.2 35.7L0.3 34.4L1.2 15.6Z" fill="#8ea4c0" stroke="#6a7c94" stroke-width=".7"/><path d="M34.4 0.6L39.5 1.3L39.7 35L36.2 35.7L34.8 28Z" fill="url(#sd)"/><path d="M2 28.6L34.6 27.3L36.2 35.7L0.3 34.4Z" fill="url(#bzl)"/><path d="M0.3 34.4L2 28.6L6 28.5L5 34.6Z" fill="#7088a8" opacity=".6"/><path d="M3.7 10L34 3.7L34 27.5L2.3 28.7Z" fill="#23232b" stroke="#9fb2ca" stroke-width=".6"/><rect x="2.8" y="31.5" width="4.6" height="1.6" fill="#55637a"/><rect x="27.8" y="32" width="5.6" height="1.7" fill="#55637a"/><rect x="16.6" y="32" width="1.6" height="1.1" fill="#7b8ca8"/><path d="M15 35.6H27.2L26.4 38.2H16Z" fill="#363e4a"/><path d="M5 39.6Q6 37.9 12 37.9H24Q29 37.9 29.8 39.6Q18 41 5 39.6Z" fill="#48525f"/><path d="M6 12L14 10.5L20 9L33 4.5" stroke="#d8c820" stroke-width="1.5" fill="none" stroke-linejoin="round" stroke-linecap="round"/><path d="M5 18L9 16L13 17.5L18 15L23 16.5L28 14.5L33 15.5" stroke="#d06030" stroke-width="1.5" fill="none" stroke-linejoin="round" stroke-linecap="round"/><path d="M5 17L10 18L16 16L22 17L28 15.5L33 14" stroke="#2090c0" stroke-width="1.2" fill="none" stroke-linejoin="round" stroke-linecap="round"/><path d="M5 22L20 21L24 19.5L33 18.5" stroke="#e020d0" stroke-width="1.4" fill="none" stroke-linejoin="round" stroke-linecap="round"/><path d="M5 25.5L20 24.5L33 22.5" stroke="#6a5ab8" stroke-width="1.4" fill="none" stroke-linejoin="round" stroke-linecap="round"/></svg>
<svg style="left:1361px;top:66.2px" width="40" height="40" viewBox="0 0 40 40"><rect x="0" y="0" width="3.8" height="31.8" fill="#4a4a4a"/><path d="M1.9 0.5V31.5" stroke="#e4e4e4" stroke-width="1.6" stroke-dasharray="1.1 1.1"/><path d="M3.8 3H11Q14 3 14 6V9.5H9.5Q8 11 9.5 12.5H12.5Q14 14 12.5 16H7.5Q6.2 17.5 7.5 19H12.5Q14 20.5 12.5 22H9.5Q8 23.5 9.5 25H14V29Q13 31.5 10 31.5H3.8Z" fill="#dcdcdc" stroke="#555" stroke-width=".7"/><path d="M3.8 10.5H7M3.8 20.5H7" stroke="#222" stroke-width="1.6"/><rect x="36.4" y="9" width="3.6" height="31" fill="#4a4a4a"/><path d="M38.2 9.5V39.5" stroke="#e4e4e4" stroke-width="1.6" stroke-dasharray="1.1 1.1"/><path d="M36.4 38.5H27V34.5H31Q32.5 33 31 31.5H28Q26.5 29.5 28 28H33Q34.3 26.5 33 25H28Q26.5 23 28 21.5H31Q32.5 20 31 18.5H28Q26 17 27.5 13L30 9.5L32 12.5H36.4Z" fill="#e0e0e0" stroke="#555" stroke-width=".7"/><path d="M36.4 20.5H33.5M36.4 30.5H33.5" stroke="#222" stroke-width="1.6"/><path d="M4 2C8 0.3 14 -0.5 19.5 1.3C23.5 3 25 9 25.5 14.5C26 20 29 25 36 28L30 38.8C26 40 21.5 39.5 19 37.5C15.5 33 14 27 13.3 23C12.5 16 11.5 10.5 9 8.5C7.5 7.3 6 6.8 4.2 6.5Z" fill="#221c26" stroke="#2e2430" stroke-width="0.9"/><path d="M10.8 3L19.2 1.8L22.5 8L14.6 10.4Z" fill="#3e3e50"/><path d="M15 11.8L22.9 9.7L24.6 17.9L17.5 20.8Z" fill="#34344c"/><path d="M18.2 23L25 19.8L31 27L24.5 35.5Z" fill="#3a3a52"/></svg>
<svg style="left:1410px;top:66.2px" width="40" height="40" viewBox="0 0 40 40"><rect x="0" y="0" width="3.8" height="31.8" fill="#4a4a4a"/><path d="M1.9 0.5V31.5" stroke="#e4e4e4" stroke-width="1.6" stroke-dasharray="1.1 1.1"/><path d="M3.8 3H11Q14 3 14 6V9.5H9.5Q8 11 9.5 12.5H12.5Q14 14 12.5 16H7.5Q6.2 17.5 7.5 19H12.5Q14 20.5 12.5 22H9.5Q8 23.5 9.5 25H14V29Q13 31.5 10 31.5H3.8Z" fill="#dcdcdc" stroke="#555" stroke-width=".7"/><path d="M3.8 10.5H7M3.8 20.5H7" stroke="#222" stroke-width="1.6"/><rect x="36.4" y="9" width="3.6" height="31" fill="#4a4a4a"/><path d="M38.2 9.5V39.5" stroke="#e4e4e4" stroke-width="1.6" stroke-dasharray="1.1 1.1"/><path d="M36.4 38.5H27V34.5H31Q32.5 33 31 31.5H28Q26.5 29.5 28 28H33Q34.3 26.5 33 25H28Q26.5 23 28 21.5H31Q32.5 20 31 18.5H28Q26 17 27.5 13L30 9.5L32 12.5H36.4Z" fill="#e0e0e0" stroke="#555" stroke-width=".7"/><path d="M36.4 20.5H33.5M36.4 30.5H33.5" stroke="#222" stroke-width="1.6"/><path d="M4 2C8 0.3 14 -0.5 19.5 1.3C23.5 3 25 9 25.5 14.5C26 20 29 25 36 28L30 38.8C26 40 21.5 39.5 19 37.5C15.5 33 14 27 13.3 23C12.5 16 11.5 10.5 9 8.5C7.5 7.3 6 6.8 4.2 6.5Z" fill="#d4d4d8" stroke="#333" stroke-width="1.4" stroke-dasharray="1 0.8"/><path d="M10.8 3L19.2 1.8L22.5 8L14.6 10.4Z" fill="#fbfbfd" stroke="#444" stroke-width=".8"/><path d="M15 11.8L22.9 9.7L24.6 17.9L17.5 20.8Z" fill="#e0ecf8" stroke="#444" stroke-width=".8"/><path d="M18.2 23L25 19.8L31 27L24.5 35.5Z" fill="#fdfdfd" stroke="#444" stroke-width=".8"/></svg>
<svg style="left:1466px;top:66.2px" width="40" height="40" viewBox="0 0 40 40"><rect x="0" y="0" width="3.8" height="31.8" fill="#4a4a4a"/><path d="M1.9 0.5V31.5" stroke="#e4e4e4" stroke-width="1.6" stroke-dasharray="1.1 1.1"/><path d="M3.8 3H11Q14 3 14 6V9.5H9.5Q8 11 9.5 12.5H12.5Q14 14 12.5 16H7.5Q6.2 17.5 7.5 19H12.5Q14 20.5 12.5 22H9.5Q8 23.5 9.5 25H14V29Q13 31.5 10 31.5H3.8Z" fill="#dcdcdc" stroke="#555" stroke-width=".7"/><path d="M3.8 10.5H7M3.8 20.5H7" stroke="#222" stroke-width="1.6"/><rect x="36.4" y="9" width="3.6" height="31" fill="#4a4a4a"/><path d="M38.2 9.5V39.5" stroke="#e4e4e4" stroke-width="1.6" stroke-dasharray="1.1 1.1"/><path d="M36.4 38.5H27V34.5H31Q32.5 33 31 31.5H28Q26.5 29.5 28 28H33Q34.3 26.5 33 25H28Q26.5 23 28 21.5H31Q32.5 20 31 18.5H28Q26 17 27.5 13L30 9.5L32 12.5H36.4Z" fill="#e0e0e0" stroke="#555" stroke-width=".7"/><path d="M36.4 20.5H33.5M36.4 30.5H33.5" stroke="#222" stroke-width="1.6"/><path d="M4 2C8 0.3 14 -0.5 19.5 1.3C23.5 3 25 9 25.5 14.5C26 20 29 25 36 28L30 38.8C26 40 21.5 39.5 19 37.5C15.5 33 14 27 13.3 23C12.5 16 11.5 10.5 9 8.5C7.5 7.3 6 6.8 4.2 6.5Z" fill="#141470" stroke="#101050" stroke-width="0.9"/><path d="M4.2 2C8 0.3 14 -0.5 19.5 1.3C22.5 2.5 24.5 6 25 10L13.8 13.6C12.5 10.5 11 9 9 8.2C7.5 7.3 6 6.8 4.2 6.5Z" fill="#f00c1c"/><path d="M9 1.2C13 0 17 0.4 19.5 1.3C21.5 2.3 23 4 24 6.5L13 9Z" fill="#ff2030" opacity=".6"/><path d="M14.8 14.6L24.6 10.8L26.8 18.8L17 24.4Z" fill="#06c83c"/><path d="M19 28.6L27 23L34.4 28.6L25.4 37Z" fill="#3aa6ff"/><path d="M21.5 28.8L27 25L32 28.8L25.6 34.5Z" fill="#7fdcff" opacity=".7"/></svg>
<svg style="left:1515.5px;top:66.2px" width="40" height="40" viewBox="0 0 40 40"><rect x="0" y="0" width="3.8" height="31.8" fill="#4a4a4a"/><path d="M1.9 0.5V31.5" stroke="#e4e4e4" stroke-width="1.6" stroke-dasharray="1.1 1.1"/><path d="M3.8 3H11Q14 3 14 6V9.5H9.5Q8 11 9.5 12.5H12.5Q14 14 12.5 16H7.5Q6.2 17.5 7.5 19H12.5Q14 20.5 12.5 22H9.5Q8 23.5 9.5 25H14V29Q13 31.5 10 31.5H3.8Z" fill="#dcdcdc" stroke="#555" stroke-width=".7"/><path d="M3.8 10.5H7M3.8 20.5H7" stroke="#222" stroke-width="1.6"/><rect x="36.4" y="9" width="3.6" height="31" fill="#4a4a4a"/><path d="M38.2 9.5V39.5" stroke="#e4e4e4" stroke-width="1.6" stroke-dasharray="1.1 1.1"/><path d="M36.4 38.5H27V34.5H31Q32.5 33 31 31.5H28Q26.5 29.5 28 28H33Q34.3 26.5 33 25H28Q26.5 23 28 21.5H31Q32.5 20 31 18.5H28Q26 17 27.5 13L30 9.5L32 12.5H36.4Z" fill="#e0e0e0" stroke="#555" stroke-width=".7"/><path d="M36.4 20.5H33.5M36.4 30.5H33.5" stroke="#222" stroke-width="1.6"/><path d="M4 2C8 0.3 14 -0.5 19.5 1.3C23.5 3 25 9 25.5 14.5C26 20 29 25 36 28L30 38.8C26 40 21.5 39.5 19 37.5C15.5 33 14 27 13.3 23C12.5 16 11.5 10.5 9 8.5C7.5 7.3 6 6.8 4.2 6.5Z" fill="#141470" stroke="#101050" stroke-width="0.9"/><path d="M4.2 2C8 0.3 14 -0.5 19.5 1.3C22.5 2.5 24.5 6 25 10L13.8 13.6C12.5 10.5 11 9 9 8.2C7.5 7.3 6 6.8 4.2 6.5Z" fill="#f00c1c"/><path d="M9 1.2C13 0 17 0.4 19.5 1.3C21.5 2.3 23 4 24 6.5L13 9Z" fill="#ff2030" opacity=".6"/><path d="M14.8 14.6L24.6 10.8L26.8 18.8L17 24.4Z" fill="#06c83c"/><path d="M19 28.6L27 23L34.4 28.6L25.4 37Z" fill="#3aa6ff"/><path d="M21.5 28.8L27 25L32 28.8L25.6 34.5Z" fill="#7fdcff" opacity=".7"/></svg>
<svg style="left:1564px;top:66.4px" width="40" height="40" viewBox="0 0 40 40"><defs><clipPath id="pcl"><rect width="40" height="40"/></clipPath><filter id="pbl" x="-20%" y="-20%" width="140%" height="140%"><feGaussianBlur stdDeviation="0.9"/></filter></defs><rect width="40" height="40" fill="#1e0626"/><rect width="40" height="40" fill="url(#pu)"/><g clip-path="url(#pcl)"><g filter="url(#pbl)"><path d="M20 20L46.1 26.9" stroke="#c060ff" stroke-width="2.6" opacity=".28"/><path d="M20 20L39.1 39.1" stroke="#c060ff" stroke-width="2.6" opacity=".28"/><path d="M20 20L27.0 46.1" stroke="#c060ff" stroke-width="2.6" opacity=".28"/><path d="M20 20L13.1 46.1" stroke="#c060ff" stroke-width="2.6" opacity=".28"/><path d="M20 20L0.9 39.1" stroke="#c060ff" stroke-width="2.6" opacity=".28"/><path d="M20 20L-6.1 27.0" stroke="#c060ff" stroke-width="2.6" opacity=".28"/><path d="M20 20L-6.1 13.1" stroke="#c060ff" stroke-width="2.6" opacity=".28"/><path d="M20 20L0.9 0.9" stroke="#c060ff" stroke-width="2.6" opacity=".28"/><path d="M20 20L13.0 -6.1" stroke="#c060ff" stroke-width="2.6" opacity=".28"/><path d="M20 20L26.9 -6.1" stroke="#c060ff" stroke-width="2.6" opacity=".28"/><path d="M20 20L39.1 0.9" stroke="#c060ff" stroke-width="2.6" opacity=".28"/><path d="M20 20L46.1 13.0" stroke="#c060ff" stroke-width="2.6" opacity=".28"/><path d="M20 20L47.0 20.0" stroke="#d04060" stroke-width="1.2" opacity=".25"/><path d="M20 20L43.4 33.5" stroke="#d04060" stroke-width="1.2" opacity=".25"/><path d="M20 20L33.5 43.4" stroke="#d04060" stroke-width="1.2" opacity=".25"/><path d="M20 20L20.0 47.0" stroke="#d04060" stroke-width="1.2" opacity=".25"/><path d="M20 20L6.5 43.4" stroke="#d04060" stroke-width="1.2" opacity=".25"/><path d="M20 20L-3.4 33.5" stroke="#d04060" stroke-width="1.2" opacity=".25"/><path d="M20 20L-7.0 20.0" stroke="#d04060" stroke-width="1.2" opacity=".25"/><path d="M20 20L-3.4 6.5" stroke="#d04060" stroke-width="1.2" opacity=".25"/><path d="M20 20L6.5 -3.4" stroke="#d04060" stroke-width="1.2" opacity=".25"/><path d="M20 20L20.0 -7.0" stroke="#d04060" stroke-width="1.2" opacity=".25"/><path d="M20 20L33.5 -3.4" stroke="#d04060" stroke-width="1.2" opacity=".25"/><path d="M20 20L43.4 6.5" stroke="#d04060" stroke-width="1.2" opacity=".25"/><ellipse cx="20" cy="20" rx="6.6" ry="8.2" fill="#fff" opacity=".92"/><ellipse cx="20" cy="20" rx="4.4" ry="6" fill="#e878b8"/><ellipse cx="20" cy="20" rx="3" ry="1" fill="#fff" opacity=".5"/></g></g></svg>
<!-- toppanels -->
<div style="left:2.5px;top:118px;width:1150.5px;height:76.6px;background:#fff;box-shadow:1.5px 2px 0 #7c7c7c"></div>
<div style="left:1155px;top:118px;width:735.5px;height:76.6px;background:#fff;box-shadow:2px 2px 0 #7c7c7c"></div>
<div style="left:6.5px;top:121.5px;width:1144.5px;height:70.5px;background:#ebebeb;border:2px solid #858585;border-top-width:1.2px"></div>
<div style="left:8.5px;top:122.7px;width:1140.5px;height:21.8px;background:#858585"></div>
<div style="left:8.5px;top:122.7px;width:1140.5px;height:21.8px;background:linear-gradient(90deg,#e2e9f5,#eef2fa);border-radius:5.5px 5.5px 0 0"></div>
<div style="left:8.5px;top:144.5px;width:1140.5px;height:1.4px;background:#a2a2a2"></div>
<div class="t" style="left:15.00px;top:127.50px;font-family:'DejaVu Sans',sans-serif;font-weight:bold;font-size:13.5px;color:#4d4b4a;letter-spacing:0.134px;">View</div>
<div style="left:9.3px;top:151px;width:247.7px;height:26.3px;background:#fff;border:2px solid;border-color:#6b6b6b #fff #fff #6b6b6b;box-shadow:inset 1px 1px 0 #9e9e9e"></div>
<div style="left:12.7px;top:155px;width:220.8px;height:20px;background:#0078d7"></div>
<div class="t" style="left:14.30px;top:159.20px;font-family:'DejaVu Sans',sans-serif;font-size:15.8px;color:#fff;letter-spacing:-0.085px;">Blue saturation scale</div>
<div style="left:235px;top:154px;width:20px;height:21.3px;background:#f0f0f0;border:1.5px solid;border-color:#fff #8c8c8c #8c8c8c #fff;box-shadow:1px 1px 0 #6d6d6d"></div>
<svg style="left:239px;top:161px" width="12" height="8" viewBox="0 0 12 8"><path d="M1 1.5h10l-5 5.5z" fill="#000"/></svg>
<div style="left:270px;top:148.3px;width:839.5px;height:33.7px;background:#efefef;border:1.5px solid;border-color:#9a9a9a #fff #fff #9a9a9a"></div>
<div class="t" style="left:272.30px;top:151.60px;font-family:'Liberation Sans',sans-serif;font-weight:bold;font-size:18.8px;color:#000;letter-spacing:0.634px;">Color Space: HDTV Rec709 , White Point: D65, EOTF:&nbsp; SDR, Power law (black compen...</div>
<div style="left:1118px;top:150.5px;width:21px;height:14.5px;background:#f0f0f0;border:1.5px solid;border-color:#fff #8c8c8c #8c8c8c #fff;box-shadow:1px 1px 0 #6d6d6d"></div>
<svg style="left:1123.5px;top:154.75px" width="8" height="6" viewBox="0 0 8 6"><path d="M0 5l3.8-4.5L7.6 5z" fill="#000"/></svg>
<div style="left:1118px;top:166.8px;width:21px;height:14.6px;background:#f0f0f0;border:1.5px solid;border-color:#fff #8c8c8c #8c8c8c #fff;box-shadow:1px 1px 0 #6d6d6d"></div>
<svg style="left:1123.5px;top:171.10000000000002px" width="8" height="6" viewBox="0 0 8 6"><path d="M0 0.5h7.6L3.8 5z" fill="#000"/></svg>
<div style="left:1158.8px;top:121.5px;width:382.5px;height:70.5px;background:#ebebeb;border:2px solid #858585;border-top-width:1.2px"></div>
<div style="left:1160.8px;top:122.7px;width:378.5px;height:21.8px;background:#858585"></div>
<div style="left:1160.8px;top:122.7px;width:378.5px;height:21.8px;background:linear-gradient(90deg,#e2e9f5,#eef2fa);border-radius:5.5px 5.5px 0 0"></div>
<div style="left:1160.8px;top:144.5px;width:378.5px;height:1.4px;background:#a2a2a2"></div>
<div class="t" style="left:1167.50px;top:127.50px;font-family:'DejaVu Sans',sans-serif;font-weight:bold;font-size:13.5px;color:#4d4b4a;letter-spacing:0.557px;">Sensor</div>
<div class="t" style="left:1165.20px;top:149.80px;font-family:'DejaVu Sans',sans-serif;font-size:15.5px;color:#000;letter-spacing:0.055px;">Simulated sensor</div>
<div class="t" style="left:1167.30px;top:171.10px;font-family:'DejaVu Sans',sans-serif;font-size:15.5px;color:#000;letter-spacing:-0.075px;">Adaptive</div>
<svg style="left:1299px;top:169px" width="17" height="17" viewBox="0 0 17 17"><path d="M1.5 1.2L15.5 8.5 1.5 15.8z" fill="#58d238" stroke="#3aa626" stroke-width="1"/></svg>
<svg style="left:1504.5px;top:164.5px" width="24" height="24" viewBox="0 0 24 24"><path d="M2 4 L13 1.5 L14.5 19 L3.5 22.5 Z" fill="#2f63c4"/><path d="M4.5 6.5 L11.8 4.8 L12.8 16.8 L5.5 19 Z" fill="#e4ecf8"/><path d="M6.5 11.5l2 3 3-5.5" stroke="#e8b838" stroke-width="1.8" fill="none"/><path d="M12 14 L20.5 8.5" stroke="#3a78d8" stroke-width="2.2"/><circle cx="20.8" cy="8" r="1.6" fill="#e05040"/></svg>
<div style="left:1545.8px;top:121.5px;width:149.8px;height:70.5px;background:#ebebeb;border:2px solid #858585;border-top-width:1.2px"></div>
<div style="left:1547.8px;top:122.7px;width:145.8px;height:21.8px;background:#858585"></div>
<div style="left:1547.8px;top:122.7px;width:145.8px;height:21.8px;background:linear-gradient(90deg,#e2e9f5,#eef2fa);border-radius:5.5px 5.5px 0 0"></div>
<div style="left:1547.8px;top:144.5px;width:145.8px;height:1.4px;background:#a2a2a2"></div>
<div class="t" style="left:1555.00px;top:127.50px;font-family:'DejaVu Sans',sans-serif;font-weight:bold;font-size:13.5px;color:#4d4b4a;letter-spacing:0.593px;">Generator</div>
<div class="t" style="left:1550.30px;top:150.20px;font-family:'DejaVu Sans',sans-serif;font-size:15.5px;color:#000;letter-spacing:-0.339px;">GDI</div>
<svg style="left:1667px;top:167px" width="24" height="24" viewBox="0 0 24 24"><path d="M2 4 L13 1.5 L14.5 19 L3.5 22.5 Z" fill="#2f63c4"/><path d="M4.5 6.5 L11.8 4.8 L12.8 16.8 L5.5 19 Z" fill="#e4ecf8"/><path d="M6.5 11.5l2 3 3-5.5" stroke="#e8b838" stroke-width="1.8" fill="none"/><path d="M12 14 L20.5 8.5" stroke="#3a78d8" stroke-width="2.2"/><circle cx="20.8" cy="8" r="1.6" fill="#e05040"/></svg>
<div style="left:1700.6px;top:121.5px;width:188.2px;height:70.5px;background:#ebebeb;border:2px solid #858585;border-top-width:1.2px"></div>
<div style="left:1702.6px;top:122.7px;width:184.2px;height:21.8px;background:#858585"></div>
<div style="left:1702.6px;top:122.7px;width:184.2px;height:21.8px;background:linear-gradient(90deg,#e2e9f5,#eef2fa);border-radius:5.5px 5.5px 0 0"></div>
<div style="left:1702.6px;top:144.5px;width:184.2px;height:1.4px;background:#a2a2a2"></div>
<div class="t" style="left:1710.60px;top:127.50px;font-family:'DejaVu Sans',sans-serif;font-weight:bold;font-size:13.5px;color:#4d4b4a;letter-spacing:0.646px;">Parameters</div>
<div style="left:1712.5px;top:149px;width:15.0px;height:15px;background:#fff;border-top:2px solid #6d6d6d;border-left:2px solid #6d6d6d;border-right:1.5px solid #fff;border-bottom:1.5px solid #fff;box-shadow:inset 1px 1px 0 #a8a8a8"></div>
<div class="t" style="left:1736.00px;top:150.50px;font-family:'DejaVu Sans',sans-serif;font-size:15.5px;color:#000;letter-spacing:0.105px;">Reference</div>
<div style="left:1712.5px;top:170.5px;width:15.0px;height:15.0px;background:#ebebeb;border-top:2px solid #6d6d6d;border-left:2px solid #6d6d6d;border-right:1.5px solid #fff;border-bottom:1.5px solid #fff;box-shadow:inset 1px 1px 0 #a8a8a8"></div>
<div class="t" style="left:1737.00px;top:172.20px;font-family:'DejaVu Sans',sans-serif;font-size:15.5px;color:#a6a6a6;letter-spacing:-0.116px;text-shadow:1px 1px 0 #fff;">XYZ Adjustment</div>
<!-- grid -->
<div style="left:2.5px;top:198.75px;width:1781.0px;height:276.25px;background:#fff;box-shadow:1.5px 2px 0 #7c7c7c"></div>
<div style="left:1785px;top:198.75px;width:105.5px;height:128.85px;background:#fff;box-shadow:2px 2px 0 #7c7c7c"></div>
<div style="left:6.7px;top:202.7px;width:1773.5px;height:269.1px;background:#ebebeb;border:2px solid #1ee01e;border-top:1px solid #858585;border-left-width:2.5px;border-right:1.7px solid #1ee01e;border-radius:5px 5px 0 0"></div>
<div style="left:1780.2px;top:203px;width:1.1px;height:268.8px;background:#909090"></div>
<div style="left:9.2px;top:203.7px;width:1769.3px;height:20.3px;background:linear-gradient(90deg,#e6ecf7,#eef2fa);border-radius:4px 4px 0 0"></div>
<div style="left:1757px;top:223.75px;width:21.6px;height:1.45px;background:#1ee01e"></div>
<div style="left:6.7px;top:203.7px;width:2.5px;height:20.3px;background:#858585"></div>
<div style="left:9.2px;top:203.7px;width:20.8px;height:20.3px;background:#e6ecf7;border-radius:5px 0 0 0"></div>
<div style="left:7.6px;top:203.4px;width:6.4px;height:6.6px;border-top:1.4px solid #1ee01e;border-left:1.4px solid #1ee01e;border-radius:5px 0 0 0"></div>
<div style="left:1770px;top:203.5px;width:10.2px;height:8.5px;border-top:1.5px dotted #1ee01e;border-right:1.7px solid #1ee01e;border-radius:0 6.5px 0 0"></div>
<div class="t" style="left:18.20px;top:209.60px;font-family:'DejaVu Sans',sans-serif;font-weight:bold;font-size:11.2px;color:#54504c;letter-spacing:-0.048px;">( Average dE: 1.13 [0.85,0.58,0.41] max: 1.71 [CIE2000] )</div>
<div style="left:10.5px;top:220.2px;width:1746.5px;height:246.3px;background:#f0f0f0;border:2px solid;border-color:#8a8a8a #fff #fff #7a7a7a;border-top-width:2.5px"></div>
<div style="left:13.2px;top:222.7px;width:66.1px;height:28.7px;background:#f0f0f0;border-right:1.2px solid #6a6a6a;border-bottom:1.2px solid #6a6a6a"></div>
<div class="t" style="left:28.30px;top:229.30px;font-family:'Liberation Sans',sans-serif;font-weight:bold;font-size:15.2px;color:#000;letter-spacing:-0.799px;">% Sat</div>
<div style="left:79.3px;top:222.7px;width:329.2px;height:28.7px;background:#f0f0f0;border-right:1.2px solid #6a6a6a;border-bottom:1.2px solid #6a6a6a;border-left:1.5px solid #fff;border-top:1px solid rgba(255,255,255,.75)"></div>
<div class="t" style="left:239.93px;top:229.30px;font-family:'Liberation Sans',sans-serif;font-weight:bold;font-size:15.2px;color:#000;letter-spacing:-0.507px;">0</div>
<div style="left:408.5px;top:222.7px;width:331.5px;height:28.7px;background:#bfbfef;border-right:1.2px solid #6a6a6a;border-bottom:1.2px solid #6a6a6a;border-left:1.5px solid #fff;border-top:1px solid rgba(255,255,255,.75)"></div>
<div class="t" style="left:566.80px;top:229.30px;font-family:'Liberation Sans',sans-serif;font-weight:bold;font-size:15.2px;color:#000;letter-spacing:-0.507px;">25</div>
<div style="left:740px;top:222.7px;width:333.3px;height:28.7px;background:#8f8fef;border-right:1.2px solid #6a6a6a;border-bottom:1.2px solid #6a6a6a;border-left:1.5px solid #fff;border-top:1px solid rgba(255,255,255,.75)"></div>
<div class="t" style="left:899.20px;top:229.30px;font-family:'Liberation Sans',sans-serif;font-weight:bold;font-size:15.2px;color:#000;letter-spacing:-0.507px;">50</div>
<div style="left:1073.3px;top:222.7px;width:329.0px;height:28.7px;background:#5f5fef;border-right:1.2px solid #6a6a6a;border-bottom:1.2px solid #6a6a6a;border-left:1.5px solid #fff;border-top:1px solid rgba(255,255,255,.75)"></div>
<div class="t" style="left:1230.35px;top:229.30px;font-family:'Liberation Sans',sans-serif;font-weight:bold;font-size:15.2px;color:#000;letter-spacing:-0.507px;">75</div>
<div style="left:1402.3px;top:222.7px;width:330.4px;height:28.7px;background:#2f2fef;border-right:1.2px solid #6a6a6a;border-bottom:1.2px solid #6a6a6a;border-left:1.5px solid #fff;border-top:1px solid rgba(255,255,255,.75)"></div>
<div class="t" style="left:1556.08px;top:229.30px;font-family:'Liberation Sans',sans-serif;font-weight:bold;font-size:15.2px;color:#000;letter-spacing:-0.507px;">100</div>
<div style="left:13.2px;top:251.39999999999998px;width:66.1px;height:31.3px;background:#f0f0f0;border-right:1.2px solid #6a6a6a;border-bottom:1.2px solid #6a6a6a;border-top:1px solid #fff"></div>
<div class="t" style="left:42.68px;top:258.55px;font-family:'Liberation Sans',sans-serif;font-weight:bold;font-size:14.9px;color:#000;letter-spacing:-0.256px;">x</div>
<div style="left:80.0px;top:251.39999999999998px;width:329.2px;height:31.3px;background:#fff;border-right:1.2px solid #c6c6c6;border-bottom:1.2px solid #c6c6c6"></div>
<div class="t" style="left:360.31px;top:258.95px;font-family:'Liberation Sans',sans-serif;font-size:15.2px;color:#000;transform:scaleX(0.8850);transform-origin:right center;">0.3127</div>
<div style="left:409.2px;top:251.39999999999998px;width:331.5px;height:31.3px;background:#fff;border-right:1.2px solid #c6c6c6;border-bottom:1.2px solid #c6c6c6"></div>
<div class="t" style="left:691.81px;top:258.95px;font-family:'Liberation Sans',sans-serif;font-size:15.2px;color:#000;transform:scaleX(0.8850);transform-origin:right center;">0.2704</div>
<div style="left:740.7px;top:251.39999999999998px;width:333.3px;height:31.3px;background:#fff;border-right:1.2px solid #c6c6c6;border-bottom:1.2px solid #c6c6c6"></div>
<div class="t" style="left:1025.11px;top:258.95px;font-family:'Liberation Sans',sans-serif;font-size:15.2px;color:#000;transform:scaleX(0.8850);transform-origin:right center;">0.2299</div>
<div style="left:1074.0px;top:251.39999999999998px;width:329.0px;height:31.3px;background:#fff;border-right:1.2px solid #c6c6c6;border-bottom:1.2px solid #c6c6c6"></div>
<div class="t" style="left:1354.11px;top:258.95px;font-family:'Liberation Sans',sans-serif;font-size:15.2px;color:#000;transform:scaleX(0.8850);transform-origin:right center;">0.1901</div>
<div style="left:1403.0px;top:251.39999999999998px;width:330.4px;height:31.3px;background:#fff;border-right:1.2px solid #c6c6c6;border-bottom:1.2px solid #c6c6c6"></div>
<div class="t" style="left:1684.51px;top:258.95px;font-family:'Liberation Sans',sans-serif;font-size:15.2px;color:#000;transform:scaleX(0.8850);transform-origin:right center;">0.1559</div>
<div style="left:13.2px;top:282.7px;width:66.1px;height:31.3px;background:#f0f0f0;border-right:1.2px solid #6a6a6a;border-bottom:1.2px solid #6a6a6a;border-top:1px solid #fff"></div>
<div class="t" style="left:42.68px;top:289.85px;font-family:'Liberation Sans',sans-serif;font-weight:bold;font-size:14.9px;color:#000;letter-spacing:-0.256px;">y</div>
<div style="left:80.0px;top:282.7px;width:329.2px;height:31.3px;background:#fff;border-right:1.2px solid #c6c6c6;border-bottom:1.2px solid #c6c6c6"></div>
<div class="t" style="left:360.31px;top:290.25px;font-family:'Liberation Sans',sans-serif;font-size:15.2px;color:#000;transform:scaleX(0.8850);transform-origin:right center;">0.3293</div>
<div style="left:409.2px;top:282.7px;width:331.5px;height:31.3px;background:#fff;border-right:1.2px solid #c6c6c6;border-bottom:1.2px solid #c6c6c6"></div>
<div class="t" style="left:691.81px;top:290.25px;font-family:'Liberation Sans',sans-serif;font-size:15.2px;color:#000;transform:scaleX(0.8850);transform-origin:right center;">0.2634</div>
<div style="left:740.7px;top:282.7px;width:333.3px;height:31.3px;background:#fff;border-right:1.2px solid #c6c6c6;border-bottom:1.2px solid #c6c6c6"></div>
<div class="t" style="left:1025.11px;top:290.25px;font-family:'Liberation Sans',sans-serif;font-size:15.2px;color:#000;transform:scaleX(0.8850);transform-origin:right center;">0.1922</div>
<div style="left:1074.0px;top:282.7px;width:329.0px;height:31.3px;background:#fff;border-right:1.2px solid #c6c6c6;border-bottom:1.2px solid #c6c6c6"></div>
<div class="t" style="left:1354.11px;top:290.25px;font-family:'Liberation Sans',sans-serif;font-size:15.2px;color:#000;transform:scaleX(0.8850);transform-origin:right center;">0.1259</div>
<div style="left:1403.0px;top:282.7px;width:330.4px;height:31.3px;background:#fff;border-right:1.2px solid #c6c6c6;border-bottom:1.2px solid #c6c6c6"></div>
<div class="t" style="left:1684.51px;top:290.25px;font-family:'Liberation Sans',sans-serif;font-size:15.2px;color:#000;transform:scaleX(0.8850);transform-origin:right center;">0.0640</div>
<div style="left:13.2px;top:314.0px;width:66.1px;height:31.4px;background:#f0f0f0;border-right:1.2px solid #6a6a6a;border-bottom:1.2px solid #6a6a6a;border-top:1px solid #fff"></div>
<div class="t" style="left:41.88px;top:321.20px;font-family:'Liberation Sans',sans-serif;font-weight:bold;font-size:14.9px;color:#000;letter-spacing:-0.307px;">Y</div>
<div style="left:80.0px;top:314.0px;width:329.2px;height:31.4px;background:#fff;border-right:1.2px solid #c6c6c6;border-bottom:1.2px solid #c6c6c6"></div>
<div class="t" style="left:368.76px;top:321.60px;font-family:'Liberation Sans',sans-serif;font-size:15.2px;color:#000;transform:scaleX(0.8850);transform-origin:right center;">7.301</div>
<div style="left:409.2px;top:314.0px;width:331.5px;height:31.4px;background:#fff;border-right:1.2px solid #c6c6c6;border-bottom:1.2px solid #c6c6c6"></div>
<div class="t" style="left:700.26px;top:321.60px;font-family:'Liberation Sans',sans-serif;font-size:15.2px;color:#000;transform:scaleX(0.8850);transform-origin:right center;">7.809</div>
<div style="left:740.7px;top:314.0px;width:333.3px;height:31.4px;background:#fff;border-right:1.2px solid #c6c6c6;border-bottom:1.2px solid #c6c6c6"></div>
<div class="t" style="left:1033.56px;top:321.60px;font-family:'Liberation Sans',sans-serif;font-size:15.2px;color:#000;transform:scaleX(0.8850);transform-origin:right center;">8.002</div>
<div style="left:1074.0px;top:314.0px;width:329.0px;height:31.4px;background:#fff;border-right:1.2px solid #c6c6c6;border-bottom:1.2px solid #c6c6c6"></div>
<div class="t" style="left:1362.56px;top:321.60px;font-family:'Liberation Sans',sans-serif;font-size:15.2px;color:#000;transform:scaleX(0.8850);transform-origin:right center;">8.545</div>
<div style="left:1403.0px;top:314.0px;width:330.4px;height:31.4px;background:#fff;border-right:1.2px solid #c6c6c6;border-bottom:1.2px solid #c6c6c6"></div>
<div class="t" style="left:1692.96px;top:321.60px;font-family:'Liberation Sans',sans-serif;font-size:15.2px;color:#000;transform:scaleX(0.8850);transform-origin:right center;">9.754</div>
<div style="left:13.2px;top:345.4px;width:66.1px;height:31.0px;background:#f0f0f0;border-right:1.2px solid #6a6a6a;border-bottom:1.2px solid #6a6a6a;border-top:1px solid #fff"></div>
<div class="t" style="left:22.55px;top:352.40px;font-family:'Liberation Sans',sans-serif;font-weight:bold;font-size:14.9px;color:#000;letter-spacing:-0.316px;">Delta E</div>
<div style="left:80.0px;top:345.4px;width:329.2px;height:31.0px;background:#aaffaa;border-right:1.2px solid #c6c6c6;border-bottom:1.2px solid #c6c6c6"></div>
<div class="t" style="left:385.67px;top:352.80px;font-family:'Liberation Sans',sans-serif;font-weight:bold;font-size:15.2px;color:#000;transform:scaleX(0.9400);transform-origin:right center;">0.1</div>
<div style="left:409.2px;top:345.4px;width:331.5px;height:31.0px;background:#aaffaa;border-right:1.2px solid #c6c6c6;border-bottom:1.2px solid #c6c6c6"></div>
<div class="t" style="left:717.17px;top:352.80px;font-family:'Liberation Sans',sans-serif;font-weight:bold;font-size:15.2px;color:#000;transform:scaleX(0.9400);transform-origin:right center;">1.7</div>
<div style="left:740.7px;top:345.4px;width:333.3px;height:31.0px;background:#aaffaa;border-right:1.2px solid #c6c6c6;border-bottom:1.2px solid #c6c6c6"></div>
<div class="t" style="left:1050.47px;top:352.80px;font-family:'Liberation Sans',sans-serif;font-weight:bold;font-size:15.2px;color:#000;transform:scaleX(0.9400);transform-origin:right center;">1.2</div>
<div style="left:1074.0px;top:345.4px;width:329.0px;height:31.0px;background:#aaffaa;border-right:1.2px solid #c6c6c6;border-bottom:1.2px solid #c6c6c6"></div>
<div class="t" style="left:1379.47px;top:352.80px;font-family:'Liberation Sans',sans-serif;font-weight:bold;font-size:15.2px;color:#000;transform:scaleX(0.9400);transform-origin:right center;">1.5</div>
<div style="left:1403.0px;top:345.4px;width:330.4px;height:31.0px;background:#aaffaa;border-right:1.2px solid #c6c6c6;border-bottom:1.2px solid #c6c6c6"></div>
<div class="t" style="left:1709.87px;top:352.80px;font-family:'Liberation Sans',sans-serif;font-weight:bold;font-size:15.2px;color:#000;transform:scaleX(0.9400);transform-origin:right center;">1.1</div>
<div style="left:13.2px;top:376.4px;width:66.1px;height:31.0px;background:#f0f0f0;border-right:1.2px solid #6a6a6a;border-bottom:1.2px solid #6a6a6a;border-top:1px solid #fff"></div>
<div class="t" style="left:19.55px;top:383.40px;font-family:'Liberation Sans',sans-serif;font-weight:bold;font-size:14.9px;color:#000;letter-spacing:-0.149px;">delta xy</div>
<div style="left:80.0px;top:376.4px;width:329.2px;height:31.0px;background:#f0f0f0;border-right:1.2px solid #c6c6c6;border-bottom:1.2px solid #c6c6c6"></div>
<div class="t" style="left:360.31px;top:383.80px;font-family:'Liberation Sans',sans-serif;font-size:15.2px;color:#000;transform:scaleX(0.8850);transform-origin:right center;">0.0003</div>
<div style="left:409.2px;top:376.4px;width:331.5px;height:31.0px;background:#f0f0f0;border-right:1.2px solid #c6c6c6;border-bottom:1.2px solid #c6c6c6"></div>
<div class="t" style="left:691.81px;top:383.80px;font-family:'Liberation Sans',sans-serif;font-size:15.2px;color:#000;transform:scaleX(0.8850);transform-origin:right center;">0.0087</div>
<div style="left:740.7px;top:376.4px;width:333.3px;height:31.0px;background:#f0f0f0;border-right:1.2px solid #c6c6c6;border-bottom:1.2px solid #c6c6c6"></div>
<div class="t" style="left:1025.11px;top:383.80px;font-family:'Liberation Sans',sans-serif;font-size:15.2px;color:#000;transform:scaleX(0.8850);transform-origin:right center;">0.0097</div>
<div style="left:1074.0px;top:376.4px;width:329.0px;height:31.0px;background:#f0f0f0;border-right:1.2px solid #c6c6c6;border-bottom:1.2px solid #c6c6c6"></div>
<div class="t" style="left:1354.11px;top:383.80px;font-family:'Liberation Sans',sans-serif;font-size:15.2px;color:#000;transform:scaleX(0.8850);transform-origin:right center;">0.0097</div>
<div style="left:1403.0px;top:376.4px;width:330.4px;height:31.0px;background:#f0f0f0;border-right:1.2px solid #c6c6c6;border-bottom:1.2px solid #c6c6c6"></div>
<div class="t" style="left:1684.51px;top:383.80px;font-family:'Liberation Sans',sans-serif;font-size:15.2px;color:#000;transform:scaleX(0.8850);transform-origin:right center;">0.0071</div>
<div style="left:13.2px;top:407.4px;width:66.1px;height:31.3px;background:#f0f0f0;border-right:1.2px solid #6a6a6a;border-bottom:1.2px solid #6a6a6a;border-top:1px solid #fff"></div>
<div class="t" style="left:24.05px;top:414.55px;font-family:'Liberation Sans',sans-serif;font-weight:bold;font-size:14.9px;color:#000;letter-spacing:-0.388px;">delta L</div>
<div style="left:80.0px;top:407.4px;width:329.2px;height:31.3px;background:#e0e0e0;border-right:1.2px solid #c6c6c6;border-bottom:1.2px solid #c6c6c6"></div>
<div class="t" style="left:397.92px;top:414.95px;font-family:'Liberation Sans',sans-serif;font-size:15.2px;color:#000;transform:scaleX(0.8850);transform-origin:right center;">=</div>
<div style="left:409.2px;top:407.4px;width:331.5px;height:31.3px;background:#e0e0e0;border-right:1.2px solid #c6c6c6;border-bottom:1.2px solid #c6c6c6"></div>
<div class="t" style="left:690.56px;top:414.95px;font-family:'Liberation Sans',sans-serif;font-size:15.2px;color:#000;transform:scaleX(0.9467);transform-origin:right center;">+7.5 %</div>
<div style="left:740.7px;top:407.4px;width:333.3px;height:31.3px;background:#e0e0e0;border-right:1.2px solid #c6c6c6;border-bottom:1.2px solid #c6c6c6"></div>
<div class="t" style="left:1023.86px;top:414.95px;font-family:'Liberation Sans',sans-serif;font-size:15.2px;color:#000;transform:scaleX(0.9467);transform-origin:right center;">+8.7 %</div>
<div style="left:1074.0px;top:407.4px;width:329.0px;height:31.3px;background:#e0e0e0;border-right:1.2px solid #c6c6c6;border-bottom:1.2px solid #c6c6c6"></div>
<div class="t" style="left:1344.40px;top:414.95px;font-family:'Liberation Sans',sans-serif;font-size:15.2px;color:#000;transform:scaleX(0.9306);transform-origin:right center;">+12.6 %</div>
<div style="left:1403.0px;top:407.4px;width:330.4px;height:31.3px;background:#e0e0e0;border-right:1.2px solid #c6c6c6;border-bottom:1.2px solid #c6c6c6"></div>
<div class="t" style="left:1683.26px;top:414.95px;font-family:'Liberation Sans',sans-serif;font-size:15.2px;color:#000;transform:scaleX(0.9467);transform-origin:right center;">+7.8 %</div>
<div style="left:13.2px;top:438.7px;width:66.1px;height:5.75px;background:#f0f0f0;border-right:1.2px solid #6a6a6a;border-top:1px solid #fff"></div>
<div style="left:80.0px;top:438.7px;width:329.2px;height:5.75px;background:#f6f6f6;border-right:1.2px solid #c6c6c6;"></div>
<div style="left:409.2px;top:438.7px;width:331.5px;height:5.75px;background:#f6f6f6;border-right:1.2px solid #c6c6c6;"></div>
<div style="left:740.7px;top:438.7px;width:333.3px;height:5.75px;background:#f6f6f6;border-right:1.2px solid #c6c6c6;"></div>
<div style="left:1074.0px;top:438.7px;width:329.0px;height:5.75px;background:#f6f6f6;border-right:1.2px solid #c6c6c6;"></div>
<div style="left:1403.0px;top:438.7px;width:330.4px;height:5.75px;background:#f6f6f6;border-right:1.2px solid #c6c6c6;"></div>
<div style="left:1733.9px;top:222.7px;width:21.7px;height:221.05px;background:#f0f0f0"></div>
<div style="left:1735.7px;top:243.3px;width:17.6px;height:176.7px;background:#cdcdcd"></div>
<div style="left:12.5px;top:443.75px;width:1743.1px;height:21.25px;background:#f0f0f0"></div>
<svg style="left:1738.4px;top:228.3px" width="12" height="12" viewBox="-6 -6 12 12"><path d="M-4.2 2.2L0 -2 4.2 2.2" stroke="#5a5a5a" stroke-width="1.9" fill="none"/></svg>
<svg style="left:1738.4px;top:426.5px" width="12" height="12" viewBox="-6 -6 12 12"><path d="M-4.2 -2.2L0 2 4.2 -2.2" stroke="#5a5a5a" stroke-width="1.9" fill="none"/></svg>
<svg style="left:16.5px;top:448.5px" width="12" height="12" viewBox="-6 -6 12 12"><path d="M2.2 -4.2L-2 0 2.2 4.2" stroke="#c2c2c2" stroke-width="1.9" fill="none"/></svg>
<svg style="left:1717.3px;top:448.5px" width="12" height="12" viewBox="-6 -6 12 12"><path d="M-2.2 -4.2L2 0 -2.2 4.2" stroke="#c2c2c2" stroke-width="1.9" fill="none"/></svg>
<div style="left:1788.5px;top:203px;width:100.3px;height:122.5px;background:#ebebeb;border:2px solid #858585;border-top-width:1.2px"></div>
<div style="left:1790.5px;top:204.2px;width:96.3px;height:20.8px;background:#858585"></div>
<div style="left:1790.5px;top:204.2px;width:96.3px;height:20.8px;background:linear-gradient(90deg,#e2e9f5,#eef2fa);border-radius:5.5px 5.5px 0 0"></div>
<div style="left:1790.5px;top:225px;width:96.3px;height:1.4px;background:#a2a2a2"></div>
<div class="t" style="left:1798.00px;top:209.00px;font-family:'DejaVu Sans',sans-serif;font-weight:bold;font-size:13.5px;color:#4d4b4a;letter-spacing:0.478px;">Display</div>
<svg style="left:1798px;top:225.3px" width="16" height="16" viewBox="-8 -8 16 16"><circle r="6.2" fill="#f0f0f0"/><path d="M-4.6 4.6A6.5 6.5 0 0 1 4.6 -4.6" stroke="#5a5a5a" stroke-width="1.9" fill="none"/><path d="M4.6 -4.6A6.5 6.5 0 0 1 -4.6 4.6" stroke="#fdfdfd" stroke-width="1.4" fill="none"/></svg>
<div class="t" style="left:1820.90px;top:228.00px;font-family:'DejaVu Sans',sans-serif;font-size:15.8px;color:#a3a3a3;letter-spacing:-0.027px;text-shadow:1px 1px 0 #fff;">Sensor</div>
<svg style="left:1798px;top:245.3px" width="16" height="16" viewBox="-8 -8 16 16"><circle r="6.2" fill="#fff"/><path d="M-4.6 4.6A6.5 6.5 0 0 1 4.6 -4.6" stroke="#5a5a5a" stroke-width="1.9" fill="none"/><path d="M4.6 -4.6A6.5 6.5 0 0 1 -4.6 4.6" stroke="#fdfdfd" stroke-width="1.4" fill="none"/></svg>
<div class="t" style="left:1820.90px;top:248.00px;font-family:'DejaVu Sans',sans-serif;font-size:15.8px;color:#000;letter-spacing:-1.154px;">RGB</div>
<svg style="left:1798px;top:266px" width="16" height="16" viewBox="-8 -8 16 16"><circle r="6.2" fill="#fff"/><path d="M-4.6 4.6A6.5 6.5 0 0 1 4.6 -4.6" stroke="#5a5a5a" stroke-width="1.9" fill="none"/><path d="M4.6 -4.6A6.5 6.5 0 0 1 -4.6 4.6" stroke="#fdfdfd" stroke-width="1.4" fill="none"/></svg>
<div class="t" style="left:1820.90px;top:268.30px;font-family:'DejaVu Sans',sans-serif;font-size:15.8px;color:#000;letter-spacing:-1.200px;">XYZ</div>
<svg style="left:1798px;top:286px" width="16" height="16" viewBox="-8 -8 16 16"><circle r="6.2" fill="#fff"/><path d="M-4.6 4.6A6.5 6.5 0 0 1 4.6 -4.6" stroke="#5a5a5a" stroke-width="1.9" fill="none"/><path d="M4.6 -4.6A6.5 6.5 0 0 1 -4.6 4.6" stroke="#fdfdfd" stroke-width="1.4" fill="none"/></svg>
<div class="t" style="left:1820.90px;top:287.50px;font-family:'DejaVu Sans',sans-serif;font-size:15.8px;color:#000;letter-spacing:-0.665px;">xyz</div>
<svg style="left:1798px;top:304.7px" width="16" height="16" viewBox="-8 -8 16 16"><circle r="6.2" fill="#fff"/><path d="M-4.6 4.6A6.5 6.5 0 0 1 4.6 -4.6" stroke="#5a5a5a" stroke-width="1.9" fill="none"/><path d="M4.6 -4.6A6.5 6.5 0 0 1 -4.6 4.6" stroke="#fdfdfd" stroke-width="1.4" fill="none"/><circle r="2.4" fill="#000"/></svg>
<div class="t" style="left:1820.90px;top:306.50px;font-family:'DejaVu Sans',sans-serif;font-size:15.8px;color:#000;letter-spacing:-1.117px;">xyY</div>
<div style="left:1785.5px;top:331px;width:104.2px;height:36px;background:#ebebeb;border:2px solid;border-color:#fff #b4b4b4 #b4b4b4 #fff;border-right-width:1.5px;border-bottom-width:1.3px"></div>
<div style="left:1785.5px;top:368.3px;width:104.2px;height:36.0px;background:#ebebeb;border:2px solid;border-color:#fff #b4b4b4 #b4b4b4 #fff;border-right-width:1.5px;border-bottom-width:1.3px"></div>
<div style="left:1785.5px;top:405.6px;width:104.2px;height:37.0px;background:#ebebeb;border:2px solid;border-color:#fff #b4b4b4 #b4b4b4 #fff;border-right-width:1.5px;border-bottom-width:1.3px"></div>
<div class="t" style="left:1849.00px;top:343.80px;font-family:'DejaVu Sans',sans-serif;font-size:15.8px;color:#000;letter-spacing:-0.955px;">Go</div>
<div class="t" style="left:1834.20px;top:380.30px;font-family:'DejaVu Sans',sans-serif;font-size:15.8px;color:#000;letter-spacing:-0.319px;">Delete</div>
<div class="t" style="left:1843.00px;top:417.50px;font-family:'DejaVu Sans',sans-serif;font-size:15.8px;color:#000;letter-spacing:-0.371px;">Refs</div>
<svg style="left:1792.5px;top:334px" width="40" height="32.3" viewBox="0 0 40 40" preserveAspectRatio="none"><rect x="0" y="0" width="3.8" height="31.8" fill="#4a4a4a"/><path d="M1.9 0.5V31.5" stroke="#e4e4e4" stroke-width="1.6" stroke-dasharray="1.1 1.1"/><path d="M3.8 3H11Q14 3 14 6V9.5H9.5Q8 11 9.5 12.5H12.5Q14 14 12.5 16H7.5Q6.2 17.5 7.5 19H12.5Q14 20.5 12.5 22H9.5Q8 23.5 9.5 25H14V29Q13 31.5 10 31.5H3.8Z" fill="#dcdcdc" stroke="#555" stroke-width=".7"/><path d="M3.8 10.5H7M3.8 20.5H7" stroke="#222" stroke-width="1.6"/><rect x="36.4" y="9" width="3.6" height="31" fill="#4a4a4a"/><path d="M38.2 9.5V39.5" stroke="#e4e4e4" stroke-width="1.6" stroke-dasharray="1.1 1.1"/><path d="M36.4 38.5H27V34.5H31Q32.5 33 31 31.5H28Q26.5 29.5 28 28H33Q34.3 26.5 33 25H28Q26.5 23 28 21.5H31Q32.5 20 31 18.5H28Q26 17 27.5 13L30 9.5L32 12.5H36.4Z" fill="#e0e0e0" stroke="#555" stroke-width=".7"/><path d="M36.4 20.5H33.5M36.4 30.5H33.5" stroke="#222" stroke-width="1.6"/><path d="M4 2C8 0.3 14 -0.5 19.5 1.3C23.5 3 25 9 25.5 14.5C26 20 29 25 36 28L30 38.8C26 40 21.5 39.5 19 37.5C15.5 33 14 27 13.3 23C12.5 16 11.5 10.5 9 8.5C7.5 7.3 6 6.8 4.2 6.5Z" fill="#141478" stroke="#0c0c50" stroke-width="0.9"/><path d="M10.8 3L19.2 1.8L22.5 8L14.6 10.4Z" fill="#2a6ce8"/><path d="M15 11.8L22.9 9.7L24.6 17.9L17.5 20.8Z" fill="#3a8cf6"/><path d="M18.2 23L25 19.8L31 27L24.5 35.5Z" fill="#46a4ff"/><path d="M19.8 24.5L24.8 22L28.6 27L24 32.5Z" fill="#8cd4ff" opacity=".55"/></svg>
<svg style="left:1794px;top:370px" width="36" height="32" viewBox="0 0 36 32"><defs><linearGradient id="bin" x1="0" y1="0" x2="1" y2="1"><stop offset="0" stop-color="#e8f6ff"/><stop offset="0.5" stop-color="#9ccaf0"/><stop offset="1" stop-color="#5c9cdc"/></linearGradient></defs><path d="M1 6Q16 -1 35 1.5L32.5 27Q22 33 7 30.5Z" fill="url(#bin)"/><path d="M1 6Q16 -1 35 1.5Q20 8 3 9Z" fill="#cfe8fb"/><ellipse cx="17" cy="26.5" rx="11" ry="3.6" fill="#d6ecfc" opacity=".8"/><path d="M17 12.5A6.5 6.5 0 0 1 28.5 11L30.5 9.5L30 16L24 15L26 13.2A4 4 0 0 0 19.8 14Z M29.5 19.5A6.5 6.5 0 0 1 18 21L16 22.5L16.5 16L22.5 17L20.5 18.8A4 4 0 0 0 26.7 18Z" fill="#14a028"/></svg><svg style="left:1792px;top:410.5px" width="41" height="29" viewBox="0 0 41 29"><path d="M0.5 29V13L3.5 11.5L5 9L7 7L8.5 3.5L10 6.5L12.5 9L15 11L17 8L19 6.5L21 1.5L23 0.5L25.5 2L27 4L29 3.5L30 8L32.5 11.5L34.5 9.5L36 8.5L37.5 11L40.5 12.5V29Z" fill="#f8f000"/><path d="M0.5 29V15L2.5 14V29Z" fill="#5a0090"/><path d="M2.5 29V13.5L5 11V29Z" fill="#f000e0"/><path d="M5 29V11L7 9L8.5 5.5L10 8.5L11 10V29Z" fill="#0000f0"/><path d="M11 29V10.5L12.5 11L14.5 12.5V29Z" fill="#00e8f0"/><path d="M14.5 29V12.5L16.5 13L18 10V29Z" fill="#10e010"/><path d="M18 29V10L19.5 8.5L20 29Z" fill="#a0e800"/><path d="M27 29V5.5L29 5L30.5 10V29Z" fill="#800000"/><path d="M30.5 29V12L32.5 13.5L34.5 11.5L36 10.5L37.5 13L40.5 14.5V29Z" fill="#f00000"/></svg>
<div style="left:1792.5px;top:448px;width:70.1px;height:21.6px;background:#f0f0f0"></div>
<div style="left:1793px;top:450.6px;width:14.3px;height:14.3px;background:#fff;border-top:2px solid #6d6d6d;border-left:2px solid #6d6d6d;border-right:1.5px solid #fff;border-bottom:1.5px solid #fff;box-shadow:inset 1px 1px 0 #a8a8a8"></div>
<div class="t" style="left:1816.40px;top:451.30px;font-family:'DejaVu Sans',sans-serif;font-size:15.8px;color:#000;letter-spacing:-0.149px;">Edit</div>
<!-- selcolor -->
<div style="left:2.5px;top:479.8px;width:478.5px;height:522.7px;background:#fff;box-shadow:2px 2px 0 #7c7c7c"></div>
<div style="left:484.5px;top:479.8px;width:1406.0px;height:522.7px;background:#fff;box-shadow:2px 2px 0 #7c7c7c"></div>
<div style="left:0px;top:1004.6px;width:1896px;height:3.4px;background:#a8a8a8"></div>
<div style="left:6.5px;top:484.4px;width:472.3px;height:515.6px;background:#ebebeb;border:2px solid #858585;border-top-width:1.2px"></div>
<div style="left:8.5px;top:485.59999999999997px;width:468.3px;height:21.1px;background:#858585"></div>
<div style="left:8.5px;top:485.59999999999997px;width:468.3px;height:21.1px;background:linear-gradient(90deg,#e2e9f5,#eef2fa);border-radius:5.5px 5.5px 0 0"></div>
<div style="left:8.5px;top:506.7px;width:468.3px;height:1.4px;background:#a2a2a2"></div>
<div class="t" style="left:15.00px;top:490.40px;font-family:'DejaVu Sans',sans-serif;font-weight:bold;font-size:13.5px;color:#4d4b4a;letter-spacing:0.523px;">Selected color</div>
<div style="left:22px;top:512.5px;width:138px;height:17.5px;background:#efefef"></div>
<div class="t" style="left:22.90px;top:513.80px;font-family:'DejaVu Sans',sans-serif;font-size:15.5px;color:#000;letter-spacing:-0.183px;">RGB Levels</div>
<div style="left:288px;top:510px;width:160px;height:17px;background:#efefef"></div>
<div class="t" style="left:301.80px;top:512.40px;font-family:'DejaVu Sans',sans-serif;font-size:15.5px;color:#000;letter-spacing:0.172px;">Current Measure</div>
<div style="left:17.9px;top:541.8px;width:249.5px;height:108.2px;background:#f0f0f0"></div>
<div style="left:17.9px;top:596.6px;width:249.5px;height:1.2px;background:repeating-linear-gradient(90deg,#9a9a9a 0 3px,transparent 3px 6px)"></div>
<svg style="left:205px;top:630px" width="64" height="20" viewBox="0 0 64 20"><path d="M5 13 C14 8,22 5.6,36 5.6 C48 5.6,56 8,62.4 11 L62.4 14 L5 14Z" fill="#c8850c" stroke="#5a3a00" stroke-width="0.8"/></svg>
<div style="left:17.5px;top:642.3px;width:250.0px;height:6.2px;background:#000"></div>
<div class="t" style="left:219.70px;top:619.20px;font-family:'Liberation Serif',serif;font-size:15.4px;color:#101030;letter-spacing:0.132px;font-weight:bold;">dE 0.0</div>
<div style="left:19.7px;top:666.8px;width:239.8px;height:91.7px;background:#f0f0f0"></div>
<div class="t" style="left:68.50px;top:669.50px;font-family:'DejaVu Sans',sans-serif;font-weight:bold;font-size:14.4px;color:#111;letter-spacing:0.027px;">No</div>
<div class="t" style="left:44.65px;top:689.30px;font-family:'DejaVu Sans',sans-serif;font-weight:bold;font-size:14.4px;color:#111;letter-spacing:0.028px;">Measure</div>
<div class="t" style="left:188.30px;top:669.50px;font-family:'DejaVu Sans',sans-serif;font-weight:bold;font-size:14.4px;color:#111;letter-spacing:0.027px;">No</div>
<div class="t" style="left:164.45px;top:689.30px;font-family:'DejaVu Sans',sans-serif;font-weight:bold;font-size:14.4px;color:#111;letter-spacing:0.028px;">Measure</div>
<div style="left:276.3px;top:538.6px;width:189.7px;height:451.9px;background:#f0f0f0;border:2px solid;border-color:#7a7a7a #fff #fff #7a7a7a;border-bottom:0"></div>
<div style="left:278.4px;top:540.3px;width:72.6px;height:28.78px;background:#f0f0f0;border-right:1.3px solid #6a6a6a;border-bottom:1.3px solid #6a6a6a;border-top:1px solid #fff"></div>
<div style="left:351px;top:540.3px;width:92.6px;height:28.78px;background:#fff;border-bottom:1.2px solid #c6c6c6;"></div>
<div class="t" style="left:287.60px;top:547.49px;font-family:'Liberation Sans',sans-serif;font-weight:bold;font-size:15.2px;color:#000;letter-spacing:-0.574px;">Y cd/m<span style="font-size:10px;vertical-align:5px;line-height:0">2</span></div>
<div style="left:278.4px;top:569.0799999999999px;width:72.6px;height:28.78px;background:#f0f0f0;border-right:1.3px solid #6a6a6a;border-bottom:1.3px solid #6a6a6a;border-top:1px solid #fff"></div>
<div style="left:351px;top:569.0799999999999px;width:92.6px;height:28.78px;background:#fff;border-bottom:1.2px solid #c6c6c6;"></div>
<div class="t" style="left:298.40px;top:576.27px;font-family:'Liberation Sans',sans-serif;font-weight:bold;font-size:15.2px;color:#000;letter-spacing:-0.219px;">Y ftL</div>
<div style="left:278.4px;top:597.8599999999999px;width:72.6px;height:28.78px;background:#f0f0f0;border-right:1.3px solid #6a6a6a;border-bottom:1.3px solid #6a6a6a;border-top:1px solid #fff"></div>
<div style="left:351px;top:597.8599999999999px;width:92.6px;height:28.78px;background:#fff;border-bottom:1.2px solid #c6c6c6;"></div>
<div class="t" style="left:306.92px;top:605.05px;font-family:'Liberation Sans',sans-serif;font-weight:bold;font-size:15.2px;color:#000;">T°</div>
<div style="left:278.4px;top:626.64px;width:72.6px;height:28.78px;background:#f0f0f0;border-right:1.3px solid #6a6a6a;border-bottom:1.3px solid #6a6a6a;border-top:1px solid #fff"></div>
<div style="left:351px;top:626.64px;width:92.6px;height:28.78px;background:#e0e0e0;border-bottom:1.2px solid #c6c6c6;"></div>
<div class="t" style="left:309.53px;top:633.83px;font-family:'Liberation Sans',sans-serif;font-weight:bold;font-size:15.2px;color:#000;">X</div>
<div style="left:278.4px;top:655.42px;width:72.6px;height:28.78px;background:#f0f0f0;border-right:1.3px solid #6a6a6a;border-bottom:1.3px solid #6a6a6a;border-top:1px solid #fff"></div>
<div style="left:351px;top:655.42px;width:92.6px;height:28.78px;background:#e0e0e0;border-bottom:1.2px solid #c6c6c6;"></div>
<div class="t" style="left:309.53px;top:662.61px;font-family:'Liberation Sans',sans-serif;font-weight:bold;font-size:15.2px;color:#000;">Y</div>
<div style="left:278.4px;top:684.1999999999999px;width:72.6px;height:28.78px;background:#f0f0f0;border-right:1.3px solid #6a6a6a;border-bottom:1.3px solid #6a6a6a;border-top:1px solid #fff"></div>
<div style="left:351px;top:684.1999999999999px;width:92.6px;height:28.78px;background:#e0e0e0;border-bottom:1.2px solid #c6c6c6;"></div>
<div class="t" style="left:309.96px;top:691.39px;font-family:'Liberation Sans',sans-serif;font-weight:bold;font-size:15.2px;color:#000;">Z</div>
<div style="left:278.4px;top:712.98px;width:72.6px;height:28.78px;background:#f0f0f0;border-right:1.3px solid #6a6a6a;border-bottom:1.3px solid #6a6a6a;border-top:1px solid #fff"></div>
<div style="left:351px;top:712.98px;width:92.6px;height:28.78px;background:#fff;border-bottom:1.2px solid #c6c6c6;"></div>
<div class="t" style="left:309.11px;top:720.17px;font-family:'Liberation Sans',sans-serif;font-weight:bold;font-size:15.2px;color:#000;">R</div>
<div style="left:278.4px;top:741.76px;width:72.6px;height:28.78px;background:#f0f0f0;border-right:1.3px solid #6a6a6a;border-bottom:1.3px solid #6a6a6a;border-top:1px solid #fff"></div>
<div style="left:351px;top:741.76px;width:92.6px;height:28.78px;background:#fff;border-bottom:1.2px solid #c6c6c6;"></div>
<div class="t" style="left:308.69px;top:748.95px;font-family:'Liberation Sans',sans-serif;font-weight:bold;font-size:15.2px;color:#000;">G</div>
<div style="left:278.4px;top:770.54px;width:72.6px;height:28.78px;background:#f0f0f0;border-right:1.3px solid #6a6a6a;border-bottom:1.3px solid #6a6a6a;border-top:1px solid #fff"></div>
<div style="left:351px;top:770.54px;width:92.6px;height:28.78px;background:#fff;border-bottom:1.2px solid #c6c6c6;"></div>
<div class="t" style="left:309.11px;top:777.73px;font-family:'Liberation Sans',sans-serif;font-weight:bold;font-size:15.2px;color:#000;">B</div>
<div style="left:278.4px;top:799.3199999999999px;width:72.6px;height:28.78px;background:#f0f0f0;border-right:1.3px solid #6a6a6a;border-bottom:1.3px solid #6a6a6a;border-top:1px solid #fff"></div>
<div style="left:351px;top:799.3199999999999px;width:92.6px;height:28.78px;background:#e0e0e0;border-bottom:1.2px solid #c6c6c6;"></div>
<div class="t" style="left:310.37px;top:806.51px;font-family:'Liberation Sans',sans-serif;font-weight:bold;font-size:15.2px;color:#000;">x</div>
<div style="left:278.4px;top:828.0999999999999px;width:72.6px;height:28.78px;background:#f0f0f0;border-right:1.3px solid #6a6a6a;border-bottom:1.3px solid #6a6a6a;border-top:1px solid #fff"></div>
<div style="left:351px;top:828.0999999999999px;width:92.6px;height:28.78px;background:#e0e0e0;border-bottom:1.2px solid #c6c6c6;"></div>
<div class="t" style="left:310.37px;top:835.29px;font-family:'Liberation Sans',sans-serif;font-weight:bold;font-size:15.2px;color:#000;">y</div>
<div style="left:278.4px;top:856.88px;width:72.6px;height:28.78px;background:#f0f0f0;border-right:1.3px solid #6a6a6a;border-bottom:1.3px solid #6a6a6a;border-top:1px solid #fff"></div>
<div style="left:351px;top:856.88px;width:92.6px;height:28.78px;background:#e0e0e0;border-bottom:1.2px solid #c6c6c6;"></div>
<div class="t" style="left:309.53px;top:864.07px;font-family:'Liberation Sans',sans-serif;font-weight:bold;font-size:15.2px;color:#000;">Y</div>
<div style="left:278.4px;top:885.66px;width:72.6px;height:28.78px;background:#f0f0f0;border-right:1.3px solid #6a6a6a;border-bottom:1.3px solid #6a6a6a;border-top:1px solid #fff"></div>
<div style="left:351px;top:885.66px;width:92.6px;height:28.78px;background:#fff;border-bottom:1.2px solid #c6c6c6;"></div>
<div class="t" style="left:310.37px;top:892.85px;font-family:'Liberation Sans',sans-serif;font-weight:bold;font-size:15.2px;color:#000;">x</div>
<div style="left:278.4px;top:914.4399999999999px;width:72.6px;height:28.78px;background:#f0f0f0;border-right:1.3px solid #6a6a6a;border-bottom:1.3px solid #6a6a6a;border-top:1px solid #fff"></div>
<div style="left:351px;top:914.4399999999999px;width:92.6px;height:28.78px;background:#fff;border-bottom:1.2px solid #c6c6c6;"></div>
<div class="t" style="left:310.37px;top:921.63px;font-family:'Liberation Sans',sans-serif;font-weight:bold;font-size:15.2px;color:#000;">y</div>
<div style="left:278.4px;top:943.22px;width:72.6px;height:28.78px;background:#f0f0f0;border-right:1.3px solid #6a6a6a;border-bottom:1.3px solid #6a6a6a;border-top:1px solid #fff"></div>
<div style="left:351px;top:943.22px;width:92.6px;height:28.78px;background:#fff;border-bottom:1.2px solid #c6c6c6;"></div>
<div class="t" style="left:310.80px;top:950.41px;font-family:'Liberation Sans',sans-serif;font-weight:bold;font-size:15.2px;color:#000;">z</div>
<div style="left:278.4px;top:972.0px;width:72.6px;height:16.5px;background:#f0f0f0;border-right:1.3px solid #6a6a6a;border-top:1px solid #fff"></div>
<div style="left:351px;top:972.0px;width:92.6px;height:16.5px;background:#e0e0e0;"></div>
<div style="left:300px;top:973.0px;width:30px;height:15.5px;overflow:hidden"><div class="t" style="left:12.89px;top:7.50px;font-family:'Liberation Sans',sans-serif;font-weight:bold;font-size:15.2px;color:#000;">l</div></div>
<div style="left:443.8px;top:540.6px;width:21.2px;height:447.9px;background:#f0f0f0;border-left:1px solid #cfcfcf"></div>
<div style="left:276.3px;top:538.6px;width:189.7px;height:2.1px;background:#7a7a7a"></div>
<div style="left:446px;top:561.5px;width:17px;height:261.8px;background:#cdcdcd"></div>
<svg style="left:448.5px;top:545.3px" width="12" height="12" viewBox="-6 -6 12 12"><path d="M-4.2 2.2L0 -2 4.2 2.2" stroke="#5a5a5a" stroke-width="1.9" fill="none"/></svg>
<svg style="left:448.5px;top:972.3px" width="12" height="12" viewBox="-6 -6 12 12"><path d="M-4.2 -2.2L0 2 4.2 -2.2" stroke="#5a5a5a" stroke-width="1.9" fill="none"/></svg>
<div style="left:21px;top:777px;width:61px;height:20px;background:#efefef"></div>
<div class="t" style="left:22.90px;top:780.60px;font-family:'DejaVu Sans',sans-serif;font-size:15.5px;color:#000;letter-spacing:0.258px;">Target</div>
<div style="left:62.3px;top:797.3px;width:145.2px;height:111.5px;border:1px solid #000;background:conic-gradient(from 0deg at 50% 50%,#38f800 0deg,#a0e400 28deg,#ffc400 52deg,#ff6a00 70deg,#ff0000 90deg,#ff0050 110deg,#ff0090 130deg,#c800c0 160deg,#8400dc 182deg,#3a00f0 210deg,#0000ff 232deg,#0050c8 252deg,#007c9c 272deg,#00c080 292deg,#00ff74 310deg,#00f838 335deg,#38f800 360deg)"></div>
<svg style="left:83.6px;top:813px" width="103" height="80" viewBox="0 0 103 80"><rect x="1" y="1" width="101" height="78" rx="10" fill="#c00000" stroke="#fff" stroke-width="1.2"/><path d="M42.7 35.4 Q42.4 33.0 44.7 33.0" stroke="#30d060" stroke-width="1.15" fill="none"/><path d="M38.1 33.6 Q38.5 30.0 41.7 29.2" stroke="#30d060" stroke-width="1.15" fill="none"/><path d="M33.3 32.0 Q34.5 27.1 38.9 25.2" stroke="#30d060" stroke-width="1.15" fill="none"/><path d="M28.4 30.8 Q30.6 24.2 36.5 21.0" stroke="#30d060" stroke-width="1.15" fill="none"/><path d="M23.4 29.9 Q26.6 21.3 34.4 16.6" stroke="#30d060" stroke-width="1.15" fill="none"/><path d="M18.4 29.3 Q22.7 18.4 32.5 12.1" stroke="#30d060" stroke-width="1.15" fill="none"/><path d="M13.2 29.0 Q18.8 15.4 31.0 7.4" stroke="#30d060" stroke-width="1.15" fill="none"/><path d="M58.3 33.0 Q60.6 33.0 60.3 35.4" stroke="#ff9020" stroke-width="1.15" fill="none"/><path d="M61.3 29.2 Q64.5 30.0 64.9 33.6" stroke="#ff9020" stroke-width="1.15" fill="none"/><path d="M64.1 25.2 Q68.5 27.1 69.7 32.0" stroke="#ff9020" stroke-width="1.15" fill="none"/><path d="M66.5 21.0 Q72.4 24.2 74.6 30.8" stroke="#ff9020" stroke-width="1.15" fill="none"/><path d="M68.6 16.6 Q76.4 21.3 79.6 29.9" stroke="#ff9020" stroke-width="1.15" fill="none"/><path d="M70.5 12.1 Q80.3 18.4 84.6 29.3" stroke="#ff9020" stroke-width="1.15" fill="none"/><path d="M72.0 7.4 Q84.2 15.4 89.8 29.0" stroke="#ff9020" stroke-width="1.15" fill="none"/><path d="M44.7 47.0 Q42.4 47.0 42.7 44.6" stroke="#3838ff" stroke-width="1.15" fill="none"/><path d="M41.7 50.8 Q38.5 50.0 38.1 46.4" stroke="#3838ff" stroke-width="1.15" fill="none"/><path d="M38.9 54.8 Q34.5 52.9 33.3 48.0" stroke="#3838ff" stroke-width="1.15" fill="none"/><path d="M36.5 59.0 Q30.6 55.8 28.4 49.2" stroke="#3838ff" stroke-width="1.15" fill="none"/><path d="M34.4 63.4 Q26.6 58.7 23.4 50.1" stroke="#3838ff" stroke-width="1.15" fill="none"/><path d="M32.5 67.9 Q22.7 61.6 18.4 50.7" stroke="#3838ff" stroke-width="1.15" fill="none"/><path d="M31.0 72.6 Q18.8 64.6 13.2 51.0" stroke="#3838ff" stroke-width="1.15" fill="none"/><path d="M60.3 44.6 Q60.6 47.0 58.3 47.0" stroke="#ff20a0" stroke-width="1.15" fill="none"/><path d="M64.9 46.4 Q64.5 50.0 61.3 50.8" stroke="#ff20a0" stroke-width="1.15" fill="none"/><path d="M69.7 48.0 Q68.5 52.9 64.1 54.8" stroke="#ff20a0" stroke-width="1.15" fill="none"/><path d="M74.6 49.2 Q72.4 55.8 66.5 59.0" stroke="#ff20a0" stroke-width="1.15" fill="none"/><path d="M79.6 50.1 Q76.4 58.7 68.6 63.4" stroke="#ff20a0" stroke-width="1.15" fill="none"/><path d="M84.6 50.7 Q80.3 61.6 70.5 67.9" stroke="#ff20a0" stroke-width="1.15" fill="none"/><path d="M89.8 51.0 Q84.2 64.6 72.0 72.6" stroke="#ff20a0" stroke-width="1.15" fill="none"/><path d="M44.5 40H58.5M51.5 33V47" stroke="#000" stroke-width="1"/><path d="M48.0 36.5L55.0 43.5M55.0 36.5L48.0 43.5" stroke="#fff" stroke-width="1.3"/></svg>
<!-- info -->
<div style="left:488.7px;top:484.4px;width:1400.1px;height:515.6px;background:#ebebeb;border:2px solid #858585;border-top-width:1.2px"></div>
<div style="left:490.7px;top:485.59999999999997px;width:1396.1px;height:21.1px;background:#858585"></div>
<div style="left:490.7px;top:485.59999999999997px;width:1396.1px;height:21.1px;background:linear-gradient(90deg,#e2e9f5,#eef2fa);border-radius:5.5px 5.5px 0 0"></div>
<div style="left:490.7px;top:506.7px;width:1396.1px;height:1.4px;background:#a2a2a2"></div>
<div class="t" style="left:498.00px;top:490.40px;font-family:'DejaVu Sans',sans-serif;font-weight:bold;font-size:13.5px;color:#4d4b4a;letter-spacing:0.601px;">Information</div>
<div style="left:495px;top:512px;width:377px;height:26.6px;background:#fff;border:2px solid;border-color:#6b6b6b #fff #fff #6b6b6b;box-shadow:inset 1px 1px 0 #9e9e9e"></div>
<div class="t" style="left:501.30px;top:520.60px;font-family:'DejaVu Sans',sans-serif;font-size:15.5px;color:#000;letter-spacing:-0.183px;">RGB Levels</div>
<div style="left:849.5px;top:514.6px;width:20.5px;height:21.8px;background:#f0f0f0;border:1.5px solid;border-color:#fff #8c8c8c #8c8c8c #fff;box-shadow:1px 1px 0 #6d6d6d"></div>
<svg style="left:853.5px;top:521.5px" width="12" height="8" viewBox="0 0 12 8"><path d="M1 1.5h10l-5 5.5z" fill="#000"/></svg>
<div style="left:498px;top:549.4px;width:1387.8px;height:441.1px;background:#fff;border:2px solid;border-color:#858585 #fff #fff #858585"></div>
<div style="left:500px;top:551.4px;width:1382.6px;height:435.0px;background:#a8a8a8"></div>
<div style="left:501.3px;top:552.6px;width:1381.3px;height:433.8px;background:#4a4a4a"></div>
<svg style="left:503.0px;top:553.9px;overflow:hidden" width="1379.6" height="432.5" viewBox="0 0 1379.6 432.5"><defs><linearGradient id="cg" x1="0" y1="0" x2="1" y2="0"><stop offset="0" stop-color="#242424"/><stop offset="0.5" stop-color="#919191"/><stop offset="1" stop-color="#ffffff"/></linearGradient></defs><rect width="1379.6" height="432.5" fill="url(#cg)"/><path d="M138.0 0V432.5 M275.9 0V432.5 M413.9 0V432.5 M551.8 0V432.5 M689.8 0V432.5 M827.8 0V432.5 M965.7 0V432.5 M1103.7 0V432.5 M1241.6 0V432.5 M0 21.7H1379.6 M0 43.2H1379.6 M0 64.8H1379.6 M0 86.4H1379.6 M0 107.9H1379.6 M0 129.5H1379.6 M0 151.0H1379.6 M0 172.6H1379.6 M0 194.1H1379.6 M0 259.1H1379.6 M0 302.5H1379.6 M0 345.9H1379.6 M0 389.3H1379.6" stroke="#0a4444" stroke-width="1.4" fill="none"/><path d="M0 0V432.5" stroke="#0a4444" stroke-width="2"/><text x="3.3" y="16.2" font-family="Liberation Serif,serif" font-size="16.8" fill="#e0e0e0">140%</text><text x="3.3" y="37.8" font-family="Liberation Serif,serif" font-size="16.8" fill="#e0e0e0">130%</text><text x="3.3" y="59.3" font-family="Liberation Serif,serif" font-size="16.8" fill="#e0e0e0">120%</text><text x="3.3" y="80.9" font-family="Liberation Serif,serif" font-size="16.8" fill="#e0e0e0">110%</text><text x="3.3" y="102.4" font-family="Liberation Serif,serif" font-size="16.8" fill="#e0e0e0">100%</text><text x="3.3" y="124.0" font-family="Liberation Serif,serif" font-size="16.8" fill="#e0e0e0">90%</text><text x="3.3" y="145.5" font-family="Liberation Serif,serif" font-size="16.8" fill="#e0e0e0">80%</text><text x="3.3" y="167.1" font-family="Liberation Serif,serif" font-size="16.8" fill="#e0e0e0">70%</text><text x="3.3" y="188.6" font-family="Liberation Serif,serif" font-size="16.8" fill="#e0e0e0">60%</text><text x="2.4" y="253.5" font-family="Liberation Serif,serif" font-size="16.8" fill="#e0e0e0">8</text><text x="2.4" y="297.0" font-family="Liberation Serif,serif" font-size="16.8" fill="#e0e0e0">6</text><text x="2.4" y="340.5" font-family="Liberation Serif,serif" font-size="16.8" fill="#e0e0e0">4</text><text x="2.4" y="384.0" font-family="Liberation Serif,serif" font-size="16.8" fill="#e0e0e0">2</text><text x="140.6" y="211.2" font-family="Liberation Serif,serif" font-size="16.9" fill="#e8e8e8">10% White</text><text x="140.6" y="427.0" font-family="Liberation Serif,serif" font-size="16.9" fill="#e8e8e8">10% White</text><text x="278.5" y="211.2" font-family="Liberation Serif,serif" font-size="16.9" fill="#e0e0e0">20% White</text><text x="278.5" y="427.0" font-family="Liberation Serif,serif" font-size="16.9" fill="#e0e0e0">20% White</text><text x="416.5" y="211.2" font-family="Liberation Serif,serif" font-size="16.9" fill="#cbcbcb">30% White</text><text x="416.5" y="427.0" font-family="Liberation Serif,serif" font-size="16.9" fill="#cbcbcb">30% White</text><text x="554.4" y="211.2" font-family="Liberation Serif,serif" font-size="16.9" fill="#a8a8a8">40% White</text><text x="554.4" y="427.0" font-family="Liberation Serif,serif" font-size="16.9" fill="#a8a8a8">40% White</text><text x="692.4" y="211.2" font-family="Liberation Serif,serif" font-size="16.9" fill="#898989">50% White</text><text x="692.4" y="427.0" font-family="Liberation Serif,serif" font-size="16.9" fill="#898989">50% White</text><text x="830.4" y="211.2" font-family="Liberation Serif,serif" font-size="16.9" fill="#707070">60% White</text><text x="830.4" y="427.0" font-family="Liberation Serif,serif" font-size="16.9" fill="#707070">60% White</text><text x="968.3" y="211.2" font-family="Liberation Serif,serif" font-size="16.9" fill="#5a5a5a">70% White</text><text x="968.3" y="427.0" font-family="Liberation Serif,serif" font-size="16.9" fill="#5a5a5a">70% White</text><text x="1106.3" y="211.2" font-family="Liberation Serif,serif" font-size="16.9" fill="#3c3c3c">80% White</text><text x="1106.3" y="427.0" font-family="Liberation Serif,serif" font-size="16.9" fill="#3c3c3c">80% White</text><text x="1244.2" y="211.2" font-family="Liberation Serif,serif" font-size="16.9" fill="#202020">90% White</text><text x="1244.2" y="427.0" font-family="Liberation Serif,serif" font-size="16.9" fill="#202020">90% White</text><text x="576.0" y="16.7" font-family="Liberation Sans,sans-serif" font-weight="bold" font-size="17.6" fill="#dede10" textLength="255">Gray Scale Balance w/gamma</text><text x="1173.0" y="379.6" font-family="Liberation Sans,sans-serif" font-weight="bold" font-size="19.6" fill="#8f8f8f" textLength="194">hcfr.sourceforge.net</text><path d="M4 108.4H69" stroke="#f4f4f4" stroke-width="1.8" stroke-dasharray="3.2 4.2"/><rect x="0" y="103.6" width="4.5" height="9" fill="#fff"/><path d="M68.2 122.1 L137.2 104.6 L206.6 108.1 L275.9 108.9 L345.4 108.7 L414.0 109.5 L484.0 108.5 L552.6 108.9 L623.0 108.7 L691.7 108.5 L754.4 108.7 L824.5 107.7 L893.2 106.9 L963.0 108.3 L1032.0 108.5 L1102.0 108.9 L1170.6 107.1 L1240.7 108.1 L1309.3 108.5 L1377.8 108.9" stroke="#ff0000" stroke-width="2.4" fill="none" stroke-linejoin="round"/><rect x="63.2" y="116.1" width="10" height="10" fill="#ff0000"/><rect x="132.2" y="98.6" width="10" height="10" fill="#ff0000"/><rect x="201.6" y="102.1" width="10" height="10" fill="#ff0000"/><rect x="270.9" y="102.9" width="10" height="10" fill="#ff0000"/><rect x="340.4" y="102.7" width="10" height="10" fill="#ff0000"/><rect x="409.0" y="103.5" width="10" height="10" fill="#ff0000"/><rect x="479.0" y="102.5" width="10" height="10" fill="#ff0000"/><rect x="547.6" y="102.9" width="10" height="10" fill="#ff0000"/><rect x="618.0" y="102.7" width="10" height="10" fill="#ff0000"/><rect x="686.7" y="102.5" width="10" height="10" fill="#ff0000"/><rect x="749.4" y="102.7" width="10" height="10" fill="#ff0000"/><rect x="819.5" y="101.7" width="10" height="10" fill="#ff0000"/><rect x="888.2" y="100.9" width="10" height="10" fill="#ff0000"/><rect x="958.0" y="102.3" width="10" height="10" fill="#ff0000"/><rect x="1027.0" y="102.5" width="10" height="10" fill="#ff0000"/><rect x="1097.0" y="102.9" width="10" height="10" fill="#ff0000"/><rect x="1165.6" y="101.1" width="10" height="10" fill="#ff0000"/><rect x="1235.7" y="102.1" width="10" height="10" fill="#ff0000"/><rect x="1304.3" y="102.5" width="10" height="10" fill="#ff0000"/><rect x="1372.8" y="102.9" width="10" height="10" fill="#ff0000"/><path d="M68.2 109.1 L137.2 107.1 L206.6 108.7 L275.9 108.7 L345.4 108.1 L414.0 108.5 L484.0 108.3 L552.6 108.3 L623.0 108.7 L691.7 109.3 L754.4 109.1 L824.5 108.5 L893.2 108.7 L963.0 108.5 L1032.0 109.1 L1102.0 107.3 L1170.6 108.7 L1240.7 108.3 L1309.3 109.3 L1377.8 107.7" stroke="#00e000" stroke-width="2.4" fill="none" stroke-linejoin="round"/><rect x="63.2" y="103.1" width="10" height="10" fill="#00e000"/><rect x="132.2" y="101.1" width="10" height="10" fill="#00e000"/><rect x="201.6" y="102.7" width="10" height="10" fill="#00e000"/><rect x="270.9" y="102.7" width="10" height="10" fill="#00e000"/><rect x="340.4" y="102.1" width="10" height="10" fill="#00e000"/><rect x="409.0" y="102.5" width="10" height="10" fill="#00e000"/><rect x="479.0" y="102.3" width="10" height="10" fill="#00e000"/><rect x="547.6" y="102.3" width="10" height="10" fill="#00e000"/><rect x="618.0" y="102.7" width="10" height="10" fill="#00e000"/><rect x="686.7" y="103.3" width="10" height="10" fill="#00e000"/><rect x="749.4" y="103.1" width="10" height="10" fill="#00e000"/><rect x="819.5" y="102.5" width="10" height="10" fill="#00e000"/><rect x="888.2" y="102.7" width="10" height="10" fill="#00e000"/><rect x="958.0" y="102.5" width="10" height="10" fill="#00e000"/><rect x="1027.0" y="103.1" width="10" height="10" fill="#00e000"/><rect x="1097.0" y="101.3" width="10" height="10" fill="#00e000"/><rect x="1165.6" y="102.7" width="10" height="10" fill="#00e000"/><rect x="1235.7" y="102.3" width="10" height="10" fill="#00e000"/><rect x="1304.3" y="103.3" width="10" height="10" fill="#00e000"/><rect x="1372.8" y="101.7" width="10" height="10" fill="#00e000"/><path d="M68.2 112.6 L137.2 107.9 L206.6 106.1 L275.9 107.4 L345.4 107.1 L414.0 108.3 L484.0 107.1 L552.6 107.4 L623.0 107.4 L691.7 108.3 L754.4 108.5 L824.5 108.5 L893.2 108.9 L963.0 108.3 L1032.0 108.3 L1102.0 109.1 L1170.6 108.9 L1240.7 108.1 L1309.3 108.3 L1377.8 108.9" stroke="#0000ff" stroke-width="2.4" fill="none" stroke-linejoin="round"/><rect x="63.2" y="106.6" width="10" height="10" fill="#0000ff"/><rect x="132.2" y="101.9" width="10" height="10" fill="#0000ff"/><rect x="201.6" y="100.1" width="10" height="10" fill="#0000ff"/><rect x="270.9" y="101.4" width="10" height="10" fill="#0000ff"/><rect x="340.4" y="101.1" width="10" height="10" fill="#0000ff"/><rect x="409.0" y="102.3" width="10" height="10" fill="#0000ff"/><rect x="479.0" y="101.1" width="10" height="10" fill="#0000ff"/><rect x="547.6" y="101.4" width="10" height="10" fill="#0000ff"/><rect x="618.0" y="101.4" width="10" height="10" fill="#0000ff"/><rect x="686.7" y="102.3" width="10" height="10" fill="#0000ff"/><rect x="749.4" y="102.5" width="10" height="10" fill="#0000ff"/><rect x="819.5" y="102.5" width="10" height="10" fill="#0000ff"/><rect x="888.2" y="102.9" width="10" height="10" fill="#0000ff"/><rect x="958.0" y="102.3" width="10" height="10" fill="#0000ff"/><rect x="1027.0" y="102.3" width="10" height="10" fill="#0000ff"/><rect x="1097.0" y="103.1" width="10" height="10" fill="#0000ff"/><rect x="1165.6" y="102.9" width="10" height="10" fill="#0000ff"/><rect x="1235.7" y="102.1" width="10" height="10" fill="#0000ff"/><rect x="1304.3" y="102.3" width="10" height="10" fill="#0000ff"/><rect x="1372.8" y="102.9" width="10" height="10" fill="#0000ff"/><path d="M68.2 430.1 L137.2 430.1 L206.6 430.1 L275.9 430.1 L345.4 430.1 L414.0 431.1 L484.0 428.1 L552.6 427.6 L623.0 427.6 L691.7 426.6 L754.4 428.6 L824.5 430.6 L893.2 426.6 L963.0 429.1 L1032.0 430.6 L1102.0 424.6 L1170.6 426.6 L1240.7 428.6 L1309.3 428.1 L1377.8 423.6" stroke="#ff00ff" stroke-width="2.4" fill="none" stroke-linejoin="round"/><rect x="63.2" y="424.1" width="10" height="10" fill="#ff00ff"/><rect x="132.2" y="424.1" width="10" height="10" fill="#ff00ff"/><rect x="201.6" y="424.1" width="10" height="10" fill="#ff00ff"/><rect x="270.9" y="424.1" width="10" height="10" fill="#ff00ff"/><rect x="340.4" y="424.1" width="10" height="10" fill="#ff00ff"/><rect x="409.0" y="425.1" width="10" height="10" fill="#ff00ff"/><rect x="479.0" y="422.1" width="10" height="10" fill="#ff00ff"/><rect x="547.6" y="421.6" width="10" height="10" fill="#ff00ff"/><rect x="618.0" y="421.6" width="10" height="10" fill="#ff00ff"/><rect x="686.7" y="420.6" width="10" height="10" fill="#ff00ff"/><rect x="749.4" y="422.6" width="10" height="10" fill="#ff00ff"/><rect x="819.5" y="424.6" width="10" height="10" fill="#ff00ff"/><rect x="888.2" y="420.6" width="10" height="10" fill="#ff00ff"/><rect x="958.0" y="423.1" width="10" height="10" fill="#ff00ff"/><rect x="1027.0" y="424.6" width="10" height="10" fill="#ff00ff"/><rect x="1097.0" y="418.6" width="10" height="10" fill="#ff00ff"/><rect x="1165.6" y="420.6" width="10" height="10" fill="#ff00ff"/><rect x="1235.7" y="422.6" width="10" height="10" fill="#ff00ff"/><rect x="1304.3" y="422.1" width="10" height="10" fill="#ff00ff"/><rect x="1372.8" y="417.6" width="10" height="10" fill="#ff00ff"/></svg>
<!-- bottom -->
<div style="left:1896px;top:113.5px;width:24px;height:895.5px;background:#f0f0f0"></div>
<div style="left:1891px;top:113.5px;width:5px;height:4.5px;background:#f0f0f0;display:none"></div>
<div style="left:1898px;top:136.8px;width:17.6px;height:822.7px;background:#cdcdcd"></div>
<svg style="left:1901px;top:121.3px" width="12" height="12" viewBox="-6 -6 12 12"><path d="M-4.4 2.3L0 -2.1 4.4 2.3" stroke="#5a5a5a" stroke-width="1.9" fill="none"/></svg>
<svg style="left:1901px;top:991px" width="12" height="12" viewBox="-6 -6 12 12"><path d="M-4.4 -2.3L0 2.1 4.4 -2.3" stroke="#5a5a5a" stroke-width="1.9" fill="none"/></svg>
<div style="left:0px;top:1007.8px;width:1920px;height:21.2px;background:#f0f0f0"></div>
<div style="left:24px;top:1009.2px;width:1811px;height:17.9px;background:#a6a6a6"></div>
<svg style="left:6.5px;top:1012.5px" width="12" height="12" viewBox="-6 -6 12 12"><path d="M2.3 -4.4L-2.1 0 2.3 4.4" stroke="#5a5a5a" stroke-width="1.9" fill="none"/></svg>
<svg style="left:1880px;top:1012.5px" width="12" height="12" viewBox="-6 -6 12 12"><path d="M-2.3 -4.4L2.1 0 -2.3 4.4" stroke="#5a5a5a" stroke-width="1.9" fill="none"/></svg>
<div style="left:0px;top:1029px;width:1920px;height:27px;background:#f0f0f0"></div>
<div style="left:0px;top:1029px;width:1920px;height:3.5px;background:#fafafa"></div>
<div style="left:160px;top:1032.5px;width:1760px;height:1.1px;background:#1a1a1a"></div>
<div style="left:0px;top:1032.8px;width:67.5px;height:23.2px;background:#000"></div>
<div style="left:0.8px;top:1034.2px;width:20.4px;height:20.2px;background:#f0f0f0;border:1.5px solid;border-color:#fff #8a8a8a #8a8a8a #fff"></div>
<div style="left:22.4px;top:1034.2px;width:20.8px;height:20.2px;background:#f0f0f0;border:1.5px solid;border-color:#fff #8a8a8a #8a8a8a #fff"></div>
<div style="left:44.4px;top:1034.2px;width:21.2px;height:20.2px;background:#f0f0f0;border:1.5px solid;border-color:#fff #8a8a8a #8a8a8a #fff"></div>
<svg style="left:0;top:1033px" width="68" height="23" viewBox="0 0 68 23"><path d="M7.5 7l9.5 9.5M17 7l-9.5 9.5" stroke="#000" stroke-width="1.5" fill="none"/><path d="M35 7.6v8l-4.8-4z" fill="#000"/><path d="M52.4 7.6v8l4.8-4z" fill="#000"/></svg>
<svg style="left:0;top:1028px" width="420" height="30" viewBox="0 1028 420 30"><path d="M148 1033.0L158.2 1055.4H234.1L244.5 1033.0Z" fill="#f0f0f0" stroke="none"/><path d="M148 1033.0L158.2 1055.4H234.1L244.5 1033.0" fill="none" stroke="#111" stroke-width="1.1"/><path d="M160 1033.0H243.5" stroke="#111" stroke-width="1.1"/><path d="M233.3 1033.0L243.5 1055.4H299.6L310 1033.0Z" fill="#f0f0f0" stroke="none"/><path d="M233.3 1033.0L243.5 1055.4H299.6L310 1033.0" fill="none" stroke="#111" stroke-width="1.1"/><path d="M234.3 1033.0H309" stroke="#111" stroke-width="1.1"/><path d="M298.5 1033.0L308.7 1055.4H391.3L401.7 1033.0Z" fill="#f0f0f0" stroke="none"/><path d="M298.5 1033.0L308.7 1055.4H391.3L401.7 1033.0" fill="none" stroke="#111" stroke-width="1.1"/><path d="M299.5 1033.0H400.7" stroke="#111" stroke-width="1.1"/><path d="M68.75 1033.0L78.95 1055.4H149.6L160 1033.0Z" fill="#fff" stroke="none"/><path d="M68.75 1033.0L78.95 1055.4H149.6L160 1033.0" fill="none" stroke="#111" stroke-width="1.1"/></svg>
<div class="t" style="left:318.00px;top:1039.20px;font-family:'DejaVu Sans',sans-serif;font-size:10.6px;color:#202028;letter-spacing:0.328px;">RGB Levels</div>
<div class="t" style="left:249.60px;top:1039.20px;font-family:'DejaVu Sans',sans-serif;font-size:10.6px;color:#202028;letter-spacing:-0.092px;">Gamma</div>
<div class="t" style="left:167.00px;top:1039.20px;font-family:'DejaVu Sans',sans-serif;font-size:10.6px;color:#202028;letter-spacing:-0.110px;">Luminance</div>
<div class="t" style="left:83.30px;top:1039.30px;font-family:'DejaVu Sans',sans-serif;font-weight:bold;font-size:11.4px;color:#101018;letter-spacing:-0.014px;">Measures</div>
<svg style="left:1708px;top:1034.5px" width="19" height="19" viewBox="0 0 19 19"><path d="M1 1.5h16.5v9.5l-1 5.5h-5.5l-1.5-3-1.5 3H3L1 11z" fill="#808000" stroke="#1a1a00" stroke-width="1"/><rect x="6.5" y="3.5" width="6.5" height="5.5" fill="#e82020"/><path d="M3.5 6.5c2-2.5 5-2 6.5 0" stroke="#fff" stroke-width="1.3" fill="none"/><path d="M11 12h6l-1 4h-4z" fill="#f4f400"/></svg>
<div style="left:1827.5px;top:1035.6px;width:15.0px;height:15.0px;background:#fff;border-top:2px solid #6d6d6d;border-left:2px solid #6d6d6d;border-right:1.5px solid #fff;border-bottom:1.5px solid #fff;box-shadow:inset 1px 1px 0 #a8a8a8"></div>
<div class="t" style="left:1850.60px;top:1036.60px;font-family:'Liberation Sans',sans-serif;font-size:13.6px;color:#000;letter-spacing:-0.039px;">Reference</div>
<div style="left:0px;top:1056px;width:1920px;height:22px;background:linear-gradient(90deg,#e3eaf5,#ecf1f9 50%,#eef2fa)"></div>
<div style="left:0px;top:1078px;width:1920px;height:2px;background:#4f4f4f"></div>
<div class="t" style="left:3.00px;top:1062.20px;font-family:'Liberation Sans',sans-serif;font-size:15.6px;color:#1c1c30;letter-spacing:-1.019px;">Ready</div>
<div style="left:1698px;top:1057.5px;width:93px;height:20.5px;background:#eef3fa;border-left:1.3px solid #a8bfdd;border-top:1.3px solid #a8bfdd;border-right:1px solid #dfe7f2"></div>
<div style="left:1795px;top:1057.5px;width:35px;height:20.5px;background:#eef3fa;border-left:1.3px solid #a8bfdd;border-top:1.3px solid #a8bfdd;border-right:1px solid #dfe7f2"></div>
<div style="left:1833.8px;top:1057.5px;width:41.2px;height:20.5px;background:#eef3fa;border-left:1.3px solid #a8bfdd;border-top:1.3px solid #a8bfdd;border-right:1px solid #dfe7f2"></div>
<div style="left:1878.8px;top:1057.5px;width:42.2px;height:20.5px;background:#eef3fa;border-left:1.3px solid #a8bfdd;border-top:1.3px solid #a8bfdd;border-right:1px solid #dfe7f2"></div>
<div class="t" style="left:1798.00px;top:1062.40px;font-family:'Liberation Sans',sans-serif;font-size:15.6px;color:#1c1c30;letter-spacing:-1.492px;">CAP</div>
<div class="t" style="left:1837.00px;top:1062.40px;font-family:'Liberation Sans',sans-serif;font-size:15.6px;color:#1c1c30;letter-spacing:-0.643px;">NUM</div>
</body></html>
